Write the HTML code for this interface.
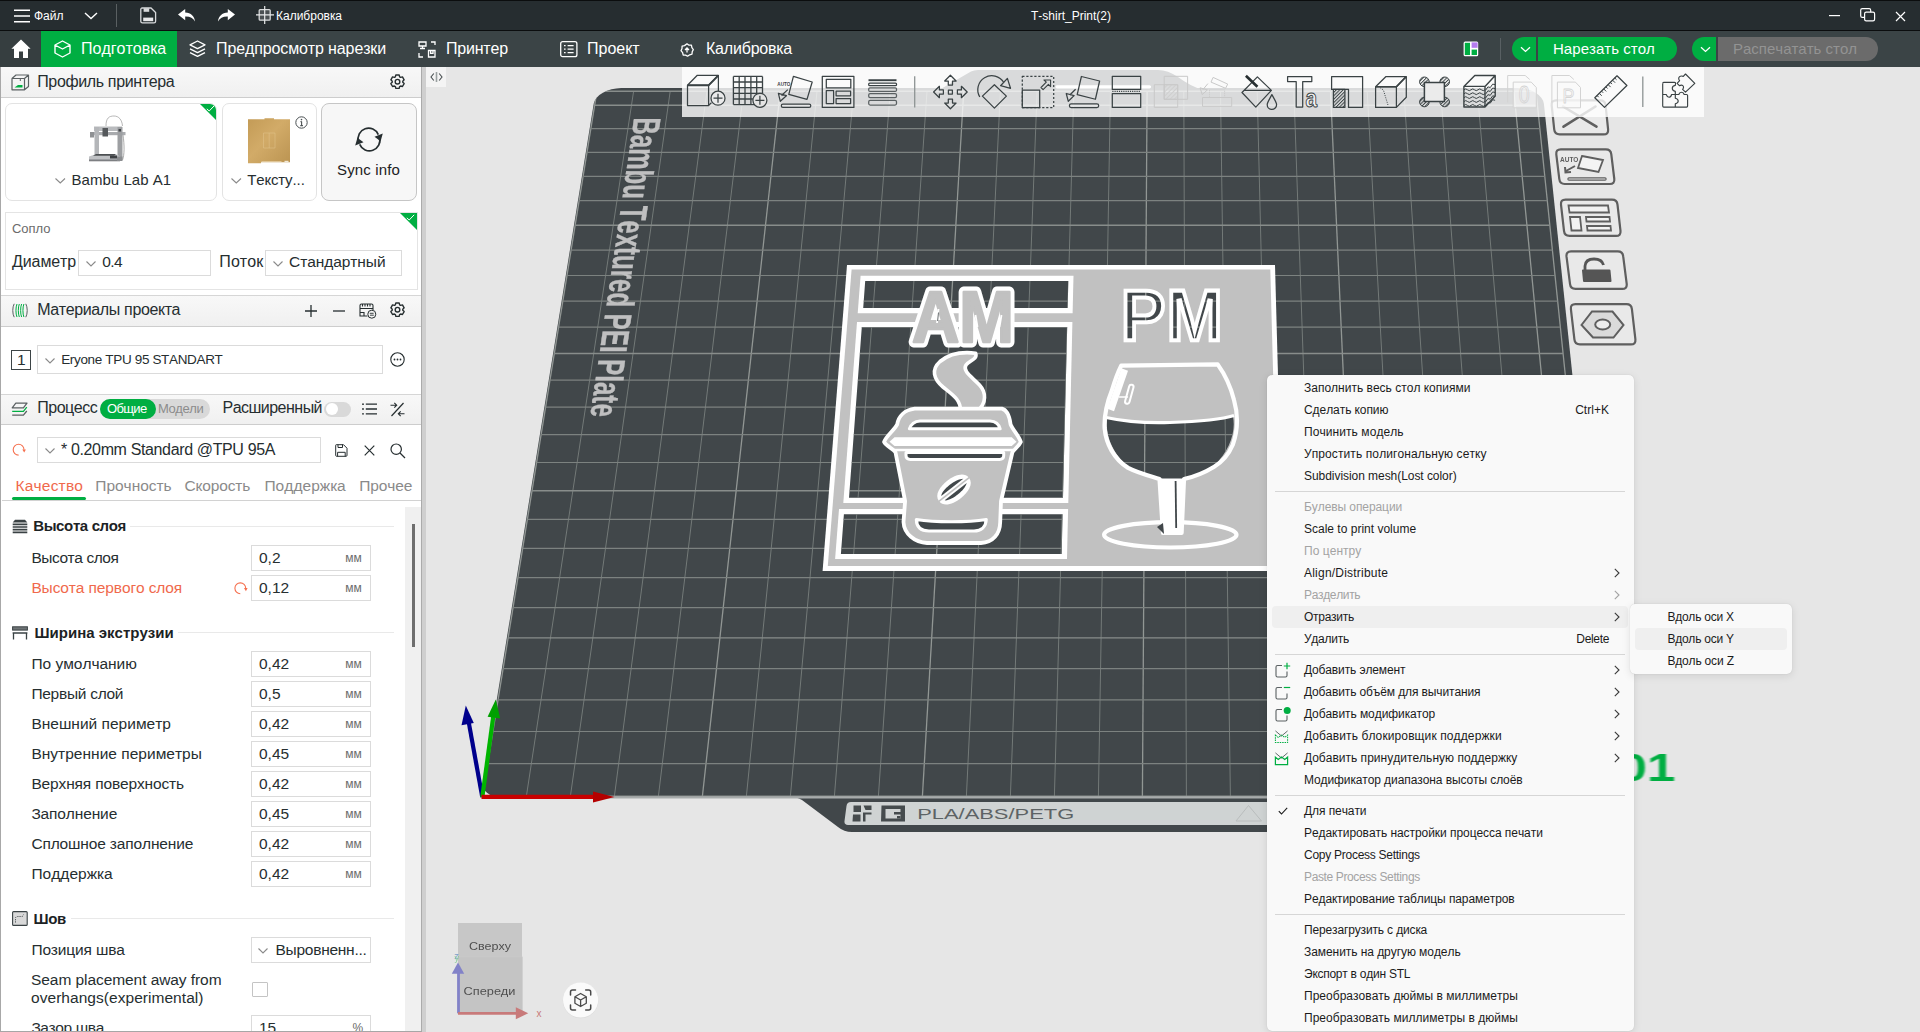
<!DOCTYPE html>
<html lang="ru">
<head>
<meta charset="utf-8">
<title>T-shirt_Print(2)</title>
<style>
*{box-sizing:border-box;margin:0;padding:0}
html,body{width:1920px;height:1032px;overflow:hidden;background:#e6e6e6;font-family:"Liberation Sans",sans-serif;color:#262e30}
.abs,.abs>*{position:absolute}
#app{position:relative;width:1920px;height:1032px;overflow:hidden}
.t{position:absolute;white-space:nowrap;line-height:1;font-kerning:none}
svg{position:absolute;overflow:visible}
/* title bar */
#title{left:0;top:0;width:1920px;height:31px;background:#262d30;border-top:1px solid #0b0d0e;border-bottom:1px solid #0b0d0e}
#title .t{color:#fff;font-size:12px}
/* tab bar */
#tabs{left:0;top:31px;width:1920px;height:36px;background:#3b4446}
#tabs .t{color:#fff;font-size:16px;top:9px}
/* left panel */
.hdr{left:2px;width:418px;height:31px;background:linear-gradient(#f8f8f8,#efefef);border-bottom:1px solid #cfcfcf}
.hdr .t{font-size:16px;color:#262e30}
.box{border:1px solid #dcdcdc;background:#fff}
.lbl{font-size:15.5px;color:#262e30}
.val{font-size:15.5px;color:#262e30}
.unit{font-size:12px;color:#6b6b6b}
.inp{border:1px solid #dbdbdb;background:#fff;width:121px;height:25px;left:250px}
/* menus */
.menu{background:#f9f9f9;border-radius:5px;box-shadow:0 2px 9px rgba(0,0,0,.10),0 0 1px rgba(0,0,0,.18)}
.menu .t{font-size:12px;color:#1a1a1a}
.menu .dis{color:#a0a0a0}
.sep{position:absolute;height:1px;background:#d4d4d4}
</style>
</head>
<body>
<div id="app">
<div id="view" class="abs" style="left:425px;top:67px;width:1495px;height:965px;background:#e6e6e6;overflow:hidden">
<svg style="left:0;top:0" width="1495" height="965" viewBox="425 67 1495 965">
<defs><filter id="blur1" x="-10%" y="-10%" width="120%" height="120%"><feGaussianBlur stdDeviation=".7"/></filter><filter id="blur05"><feGaussianBlur stdDeviation=".35"/></filter><clipPath id="plateclip"><polygon points="593.7,103.8 594.7,100.7 596.6,97.8 599.4,95.1 602.9,92.7 607.0,90.7 611.5,89.3 616.3,88.4 621.2,88.1 1517.3,88.1 1522.2,88.4 1527.0,89.3 1531.4,90.7 1535.4,92.7 1538.7,95.1 1541.3,97.8 1543.1,100.7 1543.9,103.8 1615.3,783.1 1615.3,785.8 1614.5,788.4 1613.0,790.7 1611.0,792.8 1608.3,794.5 1605.3,795.8 1601.9,796.6 1598.3,796.9 499.4,796.9 495.9,796.6 492.5,795.8 489.5,794.5 487.0,792.8 485.0,790.7 483.7,788.4 483.1,785.8 483.2,783.1"/></clipPath></defs>
<path d="M788 796L1625 796L1625 832L852 832Q844 832 838 827L802 800Q796 796.500 788 796Z" fill="#41474a"/>
<polygon points="593.7,103.8 594.7,100.7 596.6,97.8 599.4,95.1 602.9,92.7 607.0,90.7 611.5,89.3 616.3,88.4 621.2,88.1 1517.3,88.1 1522.2,88.4 1527.0,89.3 1531.4,90.7 1535.4,92.7 1538.7,95.1 1541.3,97.8 1543.1,100.7 1543.9,103.8 1615.3,783.1 1615.3,785.8 1614.5,788.4 1613.0,790.7 1611.0,792.8 1608.3,794.5 1605.3,795.8 1601.9,796.6 1598.3,796.9 499.4,796.9 495.9,796.6 492.5,795.8 489.5,794.5 487.0,792.8 485.0,790.7 483.7,788.4 483.1,785.8 483.2,783.1" fill="#41474a"/>
<path d="M939 90L971 71.600Q974 69.900 978 69.900L1158 69.900Q1168 70 1178 77Q1190 86 1203 90Z" fill="#41474a"/>
<path d="M1057 86.800H1149.500" stroke="#fff" stroke-width="3.200" stroke-linecap="round"/>
<g clip-path="url(#plateclip)" opacity=".8"><line x1="596.9" y1="91.3" x2="482.4" y2="796.2" stroke="#a6aba7" stroke-width="1.3"/>
<line x1="633.6" y1="91.3" x2="526.4" y2="796.2" stroke="#878d8a" stroke-width="0.9"/>
<line x1="670.2" y1="91.3" x2="570.4" y2="796.2" stroke="#878d8a" stroke-width="0.9"/>
<line x1="706.9" y1="91.3" x2="614.4" y2="796.2" stroke="#878d8a" stroke-width="0.9"/>
<line x1="743.6" y1="91.3" x2="658.4" y2="796.2" stroke="#878d8a" stroke-width="0.9"/>
<line x1="780.3" y1="91.3" x2="702.4" y2="796.2" stroke="#a6aba7" stroke-width="1.3"/>
<line x1="817.0" y1="91.3" x2="746.4" y2="796.2" stroke="#878d8a" stroke-width="0.9"/>
<line x1="853.7" y1="91.3" x2="790.4" y2="796.2" stroke="#878d8a" stroke-width="0.9"/>
<line x1="890.3" y1="91.3" x2="834.4" y2="796.2" stroke="#878d8a" stroke-width="0.9"/>
<line x1="927.0" y1="91.3" x2="878.4" y2="796.2" stroke="#878d8a" stroke-width="0.9"/>
<line x1="963.7" y1="91.3" x2="922.4" y2="796.2" stroke="#a6aba7" stroke-width="1.3"/>
<line x1="1000.4" y1="91.3" x2="966.4" y2="796.2" stroke="#878d8a" stroke-width="0.9"/>
<line x1="1037.1" y1="91.3" x2="1010.4" y2="796.2" stroke="#878d8a" stroke-width="0.9"/>
<line x1="1073.8" y1="91.3" x2="1054.4" y2="796.2" stroke="#878d8a" stroke-width="0.9"/>
<line x1="1110.4" y1="91.3" x2="1098.4" y2="796.2" stroke="#878d8a" stroke-width="0.9"/>
<line x1="1147.1" y1="91.3" x2="1142.4" y2="796.2" stroke="#a6aba7" stroke-width="1.3"/>
<line x1="1183.8" y1="91.3" x2="1186.4" y2="796.2" stroke="#878d8a" stroke-width="0.9"/>
<line x1="1220.5" y1="91.3" x2="1230.4" y2="796.2" stroke="#878d8a" stroke-width="0.9"/>
<line x1="1257.2" y1="91.3" x2="1274.4" y2="796.2" stroke="#878d8a" stroke-width="0.9"/>
<line x1="1293.9" y1="91.3" x2="1318.4" y2="796.2" stroke="#878d8a" stroke-width="0.9"/>
<line x1="1330.5" y1="91.3" x2="1362.4" y2="796.2" stroke="#a6aba7" stroke-width="1.3"/>
<line x1="1367.2" y1="91.3" x2="1406.4" y2="796.2" stroke="#878d8a" stroke-width="0.9"/>
<line x1="1403.9" y1="91.3" x2="1450.4" y2="796.2" stroke="#878d8a" stroke-width="0.9"/>
<line x1="1440.6" y1="91.3" x2="1494.4" y2="796.2" stroke="#878d8a" stroke-width="0.9"/>
<line x1="1477.3" y1="91.3" x2="1538.4" y2="796.2" stroke="#878d8a" stroke-width="0.9"/>
<line x1="1513.9" y1="91.3" x2="1582.4" y2="796.2" stroke="#a6aba7" stroke-width="1.3"/>
<line x1="1536.0" y1="91.3" x2="1608.8" y2="796.2" stroke="#a6aba7" stroke-width="1.3"/>
<line x1="482.4" y1="796.2" x2="1608.8" y2="796.2" stroke="#9a9f9c" stroke-width="1.4"/>
<line x1="487.7" y1="763.6" x2="1605.4" y2="763.6" stroke="#8b918e" stroke-width="1.2"/>
<line x1="492.9" y1="731.5" x2="1602.1" y2="731.5" stroke="#8b918e" stroke-width="1.2"/>
<line x1="498.0" y1="699.8" x2="1598.8" y2="699.8" stroke="#8b918e" stroke-width="1.2"/>
<line x1="503.1" y1="668.6" x2="1595.6" y2="668.6" stroke="#8b918e" stroke-width="1.2"/>
<line x1="508.1" y1="637.9" x2="1592.4" y2="637.9" stroke="#9a9f9c" stroke-width="1.4"/>
<line x1="513.0" y1="607.6" x2="1589.3" y2="607.6" stroke="#8b918e" stroke-width="1.2"/>
<line x1="517.9" y1="577.7" x2="1586.2" y2="577.7" stroke="#8b918e" stroke-width="1.2"/>
<line x1="522.6" y1="548.3" x2="1583.2" y2="548.3" stroke="#8b918e" stroke-width="1.2"/>
<line x1="527.4" y1="519.3" x2="1580.2" y2="519.3" stroke="#8b918e" stroke-width="1.2"/>
<line x1="532.0" y1="490.7" x2="1577.2" y2="490.7" stroke="#9a9f9c" stroke-width="1.4"/>
<line x1="536.6" y1="462.5" x2="1574.3" y2="462.5" stroke="#8b918e" stroke-width="1.2"/>
<line x1="541.1" y1="434.6" x2="1571.4" y2="434.6" stroke="#8b918e" stroke-width="1.2"/>
<line x1="545.6" y1="407.2" x2="1568.6" y2="407.2" stroke="#8b918e" stroke-width="1.2"/>
<line x1="550.0" y1="380.1" x2="1565.8" y2="380.1" stroke="#8b918e" stroke-width="1.2"/>
<line x1="554.3" y1="353.5" x2="1563.0" y2="353.5" stroke="#9a9f9c" stroke-width="1.4"/>
<line x1="558.6" y1="327.1" x2="1560.3" y2="327.1" stroke="#8b918e" stroke-width="1.2"/>
<line x1="562.8" y1="301.1" x2="1557.6" y2="301.1" stroke="#8b918e" stroke-width="1.2"/>
<line x1="567.0" y1="275.5" x2="1555.0" y2="275.5" stroke="#8b918e" stroke-width="1.2"/>
<line x1="571.1" y1="250.2" x2="1552.4" y2="250.2" stroke="#8b918e" stroke-width="1.2"/>
<line x1="575.1" y1="225.3" x2="1549.8" y2="225.3" stroke="#9a9f9c" stroke-width="1.4"/>
<line x1="579.1" y1="200.6" x2="1547.3" y2="200.6" stroke="#8b918e" stroke-width="1.2"/>
<line x1="583.1" y1="176.3" x2="1544.7" y2="176.3" stroke="#8b918e" stroke-width="1.2"/>
<line x1="587.0" y1="152.3" x2="1542.3" y2="152.3" stroke="#8b918e" stroke-width="1.2"/>
<line x1="590.8" y1="128.6" x2="1539.8" y2="128.6" stroke="#8b918e" stroke-width="1.2"/>
<line x1="594.6" y1="105.2" x2="1537.4" y2="105.2" stroke="#9a9f9c" stroke-width="1.4"/>
<line x1="596.9" y1="91.3" x2="1536.0" y2="91.3" stroke="#9a9f9c" stroke-width="1.4"/>
</g>
<path d="M506 797.3L1625 797.3" stroke="#a7abab" stroke-width="2.2"/>
<text transform="matrix(-0.03535 0.24049 -0.38499 0.00000 634.22 117.46)" font-family="Liberation Sans" font-weight="700" font-size="100" fill="#cdcdcd" stroke="#cdcdcd" stroke-width="1" opacity=".9" style="font-kerning:none">Bambu Textured PEI Plate</text>
<g id="model">
<defs><clipPath id="mcut"><polygon points="865.2,281.0 1068.3,281.0 1067.7,308.0 863.2,308.0" fill="#000"/>
<polygon points="861.8,327.1 1067.2,327.1 1063.0,497.7 849.0,497.7" fill="#000"/>
<polygon points="843.9,514.3 1062.6,514.3 1061.7,553.9 840.9,553.9" fill="#000"/>
<path d="M1107.2 418.5C1122 421,1140 423.5,1170 422.5C1200 421.5,1220 420,1233 416.5C1236 432,1230 450,1214 466C1204 473,1192 477,1183 479L1163 479C1150 476,1136 472,1128 467C1112 452,1105 435,1107.2 418.5Z"/></clipPath></defs>
<polygon points="847,265 1275,265 1283.3,571 822.6,571" fill="#fff"/>
<polygon points="851.6,269.6 1270.3,269.6 1278.3,566 827.8,566" fill="#c1c1c1"/>
<polygon points="860.6,275.8 1073.5,275.8 1072.6,313.2 857.7,313.2" fill="#fff"/>
<polygon points="857.0,321.9 1072.4,321.9 1068.3,502.9 843.3,502.9" fill="#fff"/>
<polygon points="839.0,509.1 1068.1,509.1 1067.0,559.1 835.1,559.1" fill="#fff"/>
<g clip-path="url(#mcut)"><rect x="820" y="260" width="470" height="315" fill="#41474a"/><g opacity=".8"><line x1="596.9" y1="91.3" x2="482.4" y2="796.2" stroke="#a6aba7" stroke-width="1.3"/>
<line x1="633.6" y1="91.3" x2="526.4" y2="796.2" stroke="#878d8a" stroke-width="0.9"/>
<line x1="670.2" y1="91.3" x2="570.4" y2="796.2" stroke="#878d8a" stroke-width="0.9"/>
<line x1="706.9" y1="91.3" x2="614.4" y2="796.2" stroke="#878d8a" stroke-width="0.9"/>
<line x1="743.6" y1="91.3" x2="658.4" y2="796.2" stroke="#878d8a" stroke-width="0.9"/>
<line x1="780.3" y1="91.3" x2="702.4" y2="796.2" stroke="#a6aba7" stroke-width="1.3"/>
<line x1="817.0" y1="91.3" x2="746.4" y2="796.2" stroke="#878d8a" stroke-width="0.9"/>
<line x1="853.7" y1="91.3" x2="790.4" y2="796.2" stroke="#878d8a" stroke-width="0.9"/>
<line x1="890.3" y1="91.3" x2="834.4" y2="796.2" stroke="#878d8a" stroke-width="0.9"/>
<line x1="927.0" y1="91.3" x2="878.4" y2="796.2" stroke="#878d8a" stroke-width="0.9"/>
<line x1="963.7" y1="91.3" x2="922.4" y2="796.2" stroke="#a6aba7" stroke-width="1.3"/>
<line x1="1000.4" y1="91.3" x2="966.4" y2="796.2" stroke="#878d8a" stroke-width="0.9"/>
<line x1="1037.1" y1="91.3" x2="1010.4" y2="796.2" stroke="#878d8a" stroke-width="0.9"/>
<line x1="1073.8" y1="91.3" x2="1054.4" y2="796.2" stroke="#878d8a" stroke-width="0.9"/>
<line x1="1110.4" y1="91.3" x2="1098.4" y2="796.2" stroke="#878d8a" stroke-width="0.9"/>
<line x1="1147.1" y1="91.3" x2="1142.4" y2="796.2" stroke="#a6aba7" stroke-width="1.3"/>
<line x1="1183.8" y1="91.3" x2="1186.4" y2="796.2" stroke="#878d8a" stroke-width="0.9"/>
<line x1="1220.5" y1="91.3" x2="1230.4" y2="796.2" stroke="#878d8a" stroke-width="0.9"/>
<line x1="1257.2" y1="91.3" x2="1274.4" y2="796.2" stroke="#878d8a" stroke-width="0.9"/>
<line x1="1293.9" y1="91.3" x2="1318.4" y2="796.2" stroke="#878d8a" stroke-width="0.9"/>
<line x1="1330.5" y1="91.3" x2="1362.4" y2="796.2" stroke="#a6aba7" stroke-width="1.3"/>
<line x1="1367.2" y1="91.3" x2="1406.4" y2="796.2" stroke="#878d8a" stroke-width="0.9"/>
<line x1="1403.9" y1="91.3" x2="1450.4" y2="796.2" stroke="#878d8a" stroke-width="0.9"/>
<line x1="1440.6" y1="91.3" x2="1494.4" y2="796.2" stroke="#878d8a" stroke-width="0.9"/>
<line x1="1477.3" y1="91.3" x2="1538.4" y2="796.2" stroke="#878d8a" stroke-width="0.9"/>
<line x1="1513.9" y1="91.3" x2="1582.4" y2="796.2" stroke="#a6aba7" stroke-width="1.3"/>
<line x1="1536.0" y1="91.3" x2="1608.8" y2="796.2" stroke="#a6aba7" stroke-width="1.3"/>
<line x1="482.4" y1="796.2" x2="1608.8" y2="796.2" stroke="#9a9f9c" stroke-width="1.4"/>
<line x1="487.7" y1="763.6" x2="1605.4" y2="763.6" stroke="#8b918e" stroke-width="1.2"/>
<line x1="492.9" y1="731.5" x2="1602.1" y2="731.5" stroke="#8b918e" stroke-width="1.2"/>
<line x1="498.0" y1="699.8" x2="1598.8" y2="699.8" stroke="#8b918e" stroke-width="1.2"/>
<line x1="503.1" y1="668.6" x2="1595.6" y2="668.6" stroke="#8b918e" stroke-width="1.2"/>
<line x1="508.1" y1="637.9" x2="1592.4" y2="637.9" stroke="#9a9f9c" stroke-width="1.4"/>
<line x1="513.0" y1="607.6" x2="1589.3" y2="607.6" stroke="#8b918e" stroke-width="1.2"/>
<line x1="517.9" y1="577.7" x2="1586.2" y2="577.7" stroke="#8b918e" stroke-width="1.2"/>
<line x1="522.6" y1="548.3" x2="1583.2" y2="548.3" stroke="#8b918e" stroke-width="1.2"/>
<line x1="527.4" y1="519.3" x2="1580.2" y2="519.3" stroke="#8b918e" stroke-width="1.2"/>
<line x1="532.0" y1="490.7" x2="1577.2" y2="490.7" stroke="#9a9f9c" stroke-width="1.4"/>
<line x1="536.6" y1="462.5" x2="1574.3" y2="462.5" stroke="#8b918e" stroke-width="1.2"/>
<line x1="541.1" y1="434.6" x2="1571.4" y2="434.6" stroke="#8b918e" stroke-width="1.2"/>
<line x1="545.6" y1="407.2" x2="1568.6" y2="407.2" stroke="#8b918e" stroke-width="1.2"/>
<line x1="550.0" y1="380.1" x2="1565.8" y2="380.1" stroke="#8b918e" stroke-width="1.2"/>
<line x1="554.3" y1="353.5" x2="1563.0" y2="353.5" stroke="#9a9f9c" stroke-width="1.4"/>
<line x1="558.6" y1="327.1" x2="1560.3" y2="327.1" stroke="#8b918e" stroke-width="1.2"/>
<line x1="562.8" y1="301.1" x2="1557.6" y2="301.1" stroke="#8b918e" stroke-width="1.2"/>
<line x1="567.0" y1="275.5" x2="1555.0" y2="275.5" stroke="#8b918e" stroke-width="1.2"/>
<line x1="571.1" y1="250.2" x2="1552.4" y2="250.2" stroke="#8b918e" stroke-width="1.2"/>
<line x1="575.1" y1="225.3" x2="1549.8" y2="225.3" stroke="#9a9f9c" stroke-width="1.4"/>
<line x1="579.1" y1="200.6" x2="1547.3" y2="200.6" stroke="#8b918e" stroke-width="1.2"/>
<line x1="583.1" y1="176.3" x2="1544.7" y2="176.3" stroke="#8b918e" stroke-width="1.2"/>
<line x1="587.0" y1="152.3" x2="1542.3" y2="152.3" stroke="#8b918e" stroke-width="1.2"/>
<line x1="590.8" y1="128.6" x2="1539.8" y2="128.6" stroke="#8b918e" stroke-width="1.2"/>
<line x1="594.6" y1="105.2" x2="1537.4" y2="105.2" stroke="#9a9f9c" stroke-width="1.4"/>
<line x1="596.9" y1="91.3" x2="1536.0" y2="91.3" stroke="#9a9f9c" stroke-width="1.4"/>
</g></g>
<defs><mask id="pmin" maskUnits="userSpaceOnUse" x="1100" y="270" width="140" height="90"><text transform="translate(1120.200 340.900) scale(.938 1)" font-family="Liberation Sans" font-weight="700" font-size="73.300" fill="#fff" stroke="#000" stroke-width="5.600" stroke-linejoin="miter">PM</text></mask></defs>
<text transform="translate(1120.200 340.900) scale(.938 1)" font-family="Liberation Sans" font-weight="700" font-size="73.300" fill="#fff" stroke="#fff" stroke-width="2.600" stroke-linejoin="miter">PM</text>
<g mask="url(#pmin)"><rect x="1100" y="270" width="140" height="90" fill="#41474a"/><g opacity=".8"><line x1="596.9" y1="91.3" x2="482.4" y2="796.2" stroke="#a6aba7" stroke-width="1.3"/>
<line x1="633.6" y1="91.3" x2="526.4" y2="796.2" stroke="#878d8a" stroke-width="0.9"/>
<line x1="670.2" y1="91.3" x2="570.4" y2="796.2" stroke="#878d8a" stroke-width="0.9"/>
<line x1="706.9" y1="91.3" x2="614.4" y2="796.2" stroke="#878d8a" stroke-width="0.9"/>
<line x1="743.6" y1="91.3" x2="658.4" y2="796.2" stroke="#878d8a" stroke-width="0.9"/>
<line x1="780.3" y1="91.3" x2="702.4" y2="796.2" stroke="#a6aba7" stroke-width="1.3"/>
<line x1="817.0" y1="91.3" x2="746.4" y2="796.2" stroke="#878d8a" stroke-width="0.9"/>
<line x1="853.7" y1="91.3" x2="790.4" y2="796.2" stroke="#878d8a" stroke-width="0.9"/>
<line x1="890.3" y1="91.3" x2="834.4" y2="796.2" stroke="#878d8a" stroke-width="0.9"/>
<line x1="927.0" y1="91.3" x2="878.4" y2="796.2" stroke="#878d8a" stroke-width="0.9"/>
<line x1="963.7" y1="91.3" x2="922.4" y2="796.2" stroke="#a6aba7" stroke-width="1.3"/>
<line x1="1000.4" y1="91.3" x2="966.4" y2="796.2" stroke="#878d8a" stroke-width="0.9"/>
<line x1="1037.1" y1="91.3" x2="1010.4" y2="796.2" stroke="#878d8a" stroke-width="0.9"/>
<line x1="1073.8" y1="91.3" x2="1054.4" y2="796.2" stroke="#878d8a" stroke-width="0.9"/>
<line x1="1110.4" y1="91.3" x2="1098.4" y2="796.2" stroke="#878d8a" stroke-width="0.9"/>
<line x1="1147.1" y1="91.3" x2="1142.4" y2="796.2" stroke="#a6aba7" stroke-width="1.3"/>
<line x1="1183.8" y1="91.3" x2="1186.4" y2="796.2" stroke="#878d8a" stroke-width="0.9"/>
<line x1="1220.5" y1="91.3" x2="1230.4" y2="796.2" stroke="#878d8a" stroke-width="0.9"/>
<line x1="1257.2" y1="91.3" x2="1274.4" y2="796.2" stroke="#878d8a" stroke-width="0.9"/>
<line x1="1293.9" y1="91.3" x2="1318.4" y2="796.2" stroke="#878d8a" stroke-width="0.9"/>
<line x1="1330.5" y1="91.3" x2="1362.4" y2="796.2" stroke="#a6aba7" stroke-width="1.3"/>
<line x1="1367.2" y1="91.3" x2="1406.4" y2="796.2" stroke="#878d8a" stroke-width="0.9"/>
<line x1="1403.9" y1="91.3" x2="1450.4" y2="796.2" stroke="#878d8a" stroke-width="0.9"/>
<line x1="1440.6" y1="91.3" x2="1494.4" y2="796.2" stroke="#878d8a" stroke-width="0.9"/>
<line x1="1477.3" y1="91.3" x2="1538.4" y2="796.2" stroke="#878d8a" stroke-width="0.9"/>
<line x1="1513.9" y1="91.3" x2="1582.4" y2="796.2" stroke="#a6aba7" stroke-width="1.3"/>
<line x1="1536.0" y1="91.3" x2="1608.8" y2="796.2" stroke="#a6aba7" stroke-width="1.3"/>
<line x1="482.4" y1="796.2" x2="1608.8" y2="796.2" stroke="#9a9f9c" stroke-width="1.4"/>
<line x1="487.7" y1="763.6" x2="1605.4" y2="763.6" stroke="#8b918e" stroke-width="1.2"/>
<line x1="492.9" y1="731.5" x2="1602.1" y2="731.5" stroke="#8b918e" stroke-width="1.2"/>
<line x1="498.0" y1="699.8" x2="1598.8" y2="699.8" stroke="#8b918e" stroke-width="1.2"/>
<line x1="503.1" y1="668.6" x2="1595.6" y2="668.6" stroke="#8b918e" stroke-width="1.2"/>
<line x1="508.1" y1="637.9" x2="1592.4" y2="637.9" stroke="#9a9f9c" stroke-width="1.4"/>
<line x1="513.0" y1="607.6" x2="1589.3" y2="607.6" stroke="#8b918e" stroke-width="1.2"/>
<line x1="517.9" y1="577.7" x2="1586.2" y2="577.7" stroke="#8b918e" stroke-width="1.2"/>
<line x1="522.6" y1="548.3" x2="1583.2" y2="548.3" stroke="#8b918e" stroke-width="1.2"/>
<line x1="527.4" y1="519.3" x2="1580.2" y2="519.3" stroke="#8b918e" stroke-width="1.2"/>
<line x1="532.0" y1="490.7" x2="1577.2" y2="490.7" stroke="#9a9f9c" stroke-width="1.4"/>
<line x1="536.6" y1="462.5" x2="1574.3" y2="462.5" stroke="#8b918e" stroke-width="1.2"/>
<line x1="541.1" y1="434.6" x2="1571.4" y2="434.6" stroke="#8b918e" stroke-width="1.2"/>
<line x1="545.6" y1="407.2" x2="1568.6" y2="407.2" stroke="#8b918e" stroke-width="1.2"/>
<line x1="550.0" y1="380.1" x2="1565.8" y2="380.1" stroke="#8b918e" stroke-width="1.2"/>
<line x1="554.3" y1="353.5" x2="1563.0" y2="353.5" stroke="#9a9f9c" stroke-width="1.4"/>
<line x1="558.6" y1="327.1" x2="1560.3" y2="327.1" stroke="#8b918e" stroke-width="1.2"/>
<line x1="562.8" y1="301.1" x2="1557.6" y2="301.1" stroke="#8b918e" stroke-width="1.2"/>
<line x1="567.0" y1="275.5" x2="1555.0" y2="275.5" stroke="#8b918e" stroke-width="1.2"/>
<line x1="571.1" y1="250.2" x2="1552.4" y2="250.2" stroke="#8b918e" stroke-width="1.2"/>
<line x1="575.1" y1="225.3" x2="1549.8" y2="225.3" stroke="#9a9f9c" stroke-width="1.4"/>
<line x1="579.1" y1="200.6" x2="1547.3" y2="200.6" stroke="#8b918e" stroke-width="1.2"/>
<line x1="583.1" y1="176.3" x2="1544.7" y2="176.3" stroke="#8b918e" stroke-width="1.2"/>
<line x1="587.0" y1="152.3" x2="1542.3" y2="152.3" stroke="#8b918e" stroke-width="1.2"/>
<line x1="590.8" y1="128.6" x2="1539.8" y2="128.6" stroke="#8b918e" stroke-width="1.2"/>
<line x1="594.6" y1="105.2" x2="1537.4" y2="105.2" stroke="#9a9f9c" stroke-width="1.4"/>
<line x1="596.9" y1="91.3" x2="1536.0" y2="91.3" stroke="#9a9f9c" stroke-width="1.4"/>
</g></g>
<text transform="translate(912 342.300) scale(.912 1)" font-family="Liberation Sans" font-weight="700" font-size="71.900" fill="#fff" stroke="#fff" stroke-width="10.900" stroke-linejoin="round">AM</text>
<text transform="translate(912 342.300) scale(.912 1)" font-family="Liberation Sans" font-weight="700" font-size="71.900" fill="#c1c1c1" stroke="#c1c1c1" stroke-width="2.400" stroke-linejoin="round">AM</text>
<path d="M938.500 309L937 323M975.500 315L977.500 327M1001.500 315L999.500 327" stroke="#fff" stroke-width="1.800" fill="none"/><path d="M938.500 312.500L937.600 321" stroke="#41474a" stroke-width=".8"/>
<path d="M975.6 353.2C962 351.500 949 354 940 361.500C931 369.500 933.500 379 943 387C953 395 961 400 960.500 411L977.500 411C987 403 986 392 979.500 385C972 377 962 371 966 365C969 360.500 978 359.500 975.600 353.200Z" fill="#c1c1c1" stroke="#fff" stroke-width="3.6" stroke-linejoin="round"/>
<path d="M914.700 408.700L1001.900 408.700C1007 410 1009.500 416 1010.600 424.400C1013 430 1019 436 1020.800 441.900C1019 446 1014.500 449 1012.400 452.300L1001 501.200L1000.200 522C1000 534 993 542.500 981 543L927 543C915 542.500 904 534 903.500 522L905.100 501.200L895.500 452.300C893.500 449 886 446 884.100 441.900C886 436 894.500 430 897.200 424.400C898.500 416 905 410 914.700 408.700Z" fill="#c1c1c1" stroke="#fff" stroke-width="3.8" stroke-linejoin="round"/>
<path d="M909.400 428.800C911 424 914 421.300 920 420.900L990 420.900C996 421.300 999 424 1000.200 428.800Z" fill="#41474a" stroke="#fff" stroke-width="3" stroke-linejoin="round"/>
<path d="M889.500 441.700L894.500 437.200H1011.800L1016.500 441.700L1011.800 446H894.500Z" fill="#fff"/>
<path d="M894.500 450L1013 450" stroke="#fff" stroke-width="2.4"/>
<path d="M906 452.600H1003.700V455.500Q1003.700 459.400 999.500 459.400H910.500Q906 459.400 906 455.500Z" fill="#41474a" stroke="#fff" stroke-width="3" stroke-linejoin="round"/>
<path d="M916.400 519.500C935 522.500 968 522.500 986.200 519.500C986 527 981 531 974 531H929C921 531 916.500 527 916.400 519.500Z" fill="#41474a" stroke="#fff" stroke-width="3.200" stroke-linejoin="round"/>
<g transform="translate(954 489.500) rotate(-38)"><path d="M-19 0C-19 -8 -9 -11 0 -11C9 -11 19 -8 19 0C19 8 9 11 0 11C-9 11 -19 8 -19 0Z" fill="#fff"/><path d="M-14 -2.800C-10 -7.500 8 -7.500 14 -2.800Z" fill="#41474a"/><path d="M-14 2.800C-10 7.500 8 7.500 14 2.800Z" fill="#41474a"/><path d="M-20 0H20" stroke="#c1c1c1" stroke-width="1.600"/></g>
<ellipse cx="1170.300" cy="534.800" rx="66.200" ry="12.700" fill="none" stroke="#fff" stroke-width="4.200"/>
<path d="M1121.200 365.600L1217.700 364.400C1226 376 1231 388 1234 400C1238 414 1238 430 1232.800 444.700C1228 456 1222 462 1214.200 466.700C1204 473 1193 477 1184 479L1181.600 533L1163 533L1159.500 479C1150 476 1138 473 1128.100 467.900C1114 459 1106 444 1104.600 428C1104 414 1108 400 1112 390C1115 380 1118 372 1121.200 365.600Z" fill="none" stroke="#fff" stroke-width="4.200" stroke-linejoin="round"/>
<path d="M1106 417.500C1122 421 1140 423.500 1170 422.500C1200 421.500 1220 420 1234 415.500" fill="none" stroke="#fff" stroke-width="3.200"/>
<path d="M1159.500 478.500L1184 478.500L1181.600 533.500L1163 533.500Z" fill="#fff"/>
<path d="M1175.600 481L1176.200 528" stroke="#41474a" stroke-width="1.800"/>
<path d="M1163 523L1157 527L1164 534Z" fill="#41474a"/>
<path d="M1124.700 369.500L1110.700 410" stroke="#fff" stroke-width="7" stroke-linecap="butt"/>
<path d="M1131.300 387L1127.300 401.500" stroke="#fff" stroke-width="6.500" stroke-linecap="round"/><path d="M1131.300 387L1127.300 401.500" stroke="#c1c1c1" stroke-width="2.500" stroke-linecap="round"/>
<path d="M1119 397H1128" stroke="#fff" stroke-width="1.500"/>
</g>
<path d="M482.3 797.200L467.6 716" stroke="#00008c" stroke-width="4.2"/><path d="M465.8 705.5L473.8 723L461.5 725.3Z" fill="#00008c"/>
<path d="M482.3 797.200L493.6 714" stroke="#00b400" stroke-width="4.2"/><path d="M495.8 699.5L500.2 718.5L487.6 716.8Z" fill="#00a000"/>
<path d="M481.5 796.900L595 796.900" stroke="#c80000" stroke-width="4.4"/><path d="M614.5 796.900L593 791.400L593 802.400Z" fill="#b40000"/>
<path d="M851 802H1625V825H848Q844 825 844.5 821L846.5 806Q847 802 851 802Z" fill="#cfd3d3"/>
<g fill="#454b4d"><path d="M853.5 805.500H861V812H853.500ZM863.500 805.500H871.500V810H865.500ZM853 814.500H860.500V821.500H852.500ZM863 812.500H871.500V814.500H865.500V821.500H863Z"/><path d="M881.500 805.500H905V821.500H881ZM885.500 809V818.500H900.500V814.500H894V812H900.500V809Z" fill-rule="evenodd"/><rect x="897" y="816" width="3.500" height="2.500"/></g>
<text x="917.200" y="818.600" font-family="Liberation Sans" font-size="14.200" fill="#5d6365" textLength="157" lengthAdjust="spacingAndGlyphs" style="font-kerning:none" transform="translate(0 0)">PLA/ABS/PETG</text>
<path d="M1248.500 805.500L1261.500 821H1236Z" fill="none" stroke="#b9bdbd" stroke-width="1"/>
<g filter="url(#blur1)"><path d="M1556.2 100.3L1600.1 100.3Q1605.1 100.3 1605.6 105.3L1608.1 129.4Q1608.6 134.4 1603.6 134.4L1559.7 134.4Q1554.7 134.4 1554.2 129.4L1551.7 105.3Q1551.2 100.3 1556.2 100.3Z" fill="#e9e9e9" stroke="#5e5e5e" stroke-width="2.2"/>
<path d="M1563.500 126.700L1595.500 106.500M1596.500 126.700L1563 106.500" fill="none" stroke="#5e5e5e" stroke-width="2.600" stroke-linecap="round"/>
<path d="M1560.8 149.3L1605.8 149.3Q1610.8 149.3 1611.3 154.3L1614.3 179.0Q1614.8 184.0 1609.8 184.0L1564.8 184.0Q1559.8 184.0 1559.3 179.0L1556.3 154.3Q1555.8 149.3 1560.8 149.3Z" fill="#e9e9e9" stroke="#5e5e5e" stroke-width="2.2"/>
<path d="M1582 156L1603 160L1598.500 172L1578 168Z" fill="#f4f4f4" stroke="#5e5e5e" stroke-width="1.800"/><path d="M1569 179H1605" stroke="#5e5e5e" stroke-width="3.400" stroke-linecap="round"/><path d="M1569 179H1605" stroke="#e6e6e6" stroke-width="1.200" stroke-linecap="round"/><path d="M1575 166L1566 171M1565 167L1565.500 172.500L1571 172" fill="none" stroke="#5e5e5e" stroke-width="2"/><text x="1560" y="161.500" font-family="Liberation Sans" font-weight="700" font-size="6.500" fill="#5e5e5e">AUTO</text>
<path d="M1565.5 199.6L1612.0 199.6Q1617.0 199.6 1617.5 204.6L1620.5 230.9Q1621.0 235.9 1616.0 235.9L1569.5 235.9Q1564.5 235.9 1564.0 230.9L1561.0 204.6Q1560.5 199.6 1565.5 199.6Z" fill="#e9e9e9" stroke="#5e5e5e" stroke-width="2.2"/>
<path d="M1568.500 205.500H1608L1609 212.500H1569.500ZM1570 217H1580L1581.500 230.500H1571.500ZM1586 217H1609.500L1610 221.500H1586.500ZM1587 226H1610.500L1611 230.500H1587.500Z" fill="#f2f2f2" stroke="#5e5e5e" stroke-width="1.800"/>
<path d="M1571.0 251.4L1617.7 251.4Q1622.7 251.4 1623.2 256.4L1626.7 283.9Q1627.2 288.9 1622.2 288.9L1575.5 288.9Q1570.5 288.9 1570.0 283.9L1566.5 256.4Q1566.0 251.4 1571.0 251.4Z" fill="#e9e9e9" stroke="#5e5e5e" stroke-width="2.2"/>
<path d="M1583 270.500H1609.500L1610.500 281H1584Z" fill="#555" stroke="#555" stroke-width="2" stroke-linejoin="round"/><path d="M1585 270V266Q1585.500 259 1594 259Q1602 259 1603.500 265" fill="none" stroke="#555" stroke-width="2.800"/>
<path d="M1575.4 304.1L1626.4 304.1Q1631.4 304.1 1631.9 309.1L1635.4 339.4Q1635.9 344.4 1630.9 344.4L1579.9 344.4Q1574.9 344.4 1574.4 339.4L1570.9 309.1Q1570.4 304.1 1575.4 304.1Z" fill="#e9e9e9" stroke="#5e5e5e" stroke-width="2.2"/>
<path d="M1581.500 325L1592 311.500H1612.500L1623.500 325L1613.500 337.500H1593Z" fill="#dadada" stroke="#5e5e5e" stroke-width="2"/><ellipse cx="1602.700" cy="324.500" rx="7.500" ry="5" fill="#ededed" stroke="#5e5e5e" stroke-width="2"/>
</g>
<text transform="translate(1618.500 780.500) scale(1.330 1)" font-family="Liberation Sans" font-weight="700" font-size="38.500" fill="#00ae42" filter="url(#blur1)">01</text>
<rect x="458" y="923" width="64" height="34" fill="#c7c7c7"/><rect x="458" y="956.600" width="64.600" height="56.700" fill="#c4c4c4"/><path d="M458 956.800H522" stroke="#cbcbcb" stroke-width=".8"/>
<g filter="url(#blur05)"><text x="469" y="949.600" font-family="Liberation Sans" font-size="10.500" fill="#505050" textLength="42" lengthAdjust="spacingAndGlyphs">Сверху</text><text x="463.600" y="995" font-family="Liberation Sans" font-size="10.500" fill="#505050" textLength="51.800" lengthAdjust="spacingAndGlyphs">Спереди</text></g>
<path d="M458.500 1013.300V972" stroke="#8282c8" stroke-width="2.800"/><path d="M458 962.500L464.200 973.800H451.800Z" fill="#8282c8"/>
<path d="M458 1013.300H517" stroke="#c87a7a" stroke-width="2.800"/><path d="M528.200 1013.300L515.800 1007.300V1019.300Z" fill="#c87a7a"/>
<text x="536.500" y="1017.200" font-family="Liberation Sans" font-size="10" fill="#c87a7a">x</text>
<text x="454.200" y="958.500" font-family="Liberation Sans" font-size="9" fill="#7aa0c8">z</text><text x="454.400" y="960.500" font-family="Liberation Sans" font-size="9" fill="#7ac88a" opacity=".8">y</text>
<circle cx="580.600" cy="1000.500" r="17.800" fill="#000" opacity=".05" filter="url(#blur1)"/><circle cx="580.600" cy="1000" r="17.600" fill="#fafafa"/>
<g fill="none" stroke="#4a4a4a" stroke-width="1.500"><path d="M570.500 995V992Q570.500 990 572.500 990H575.500M585.700 990H588.700Q590.700 990 590.700 992V995M590.700 1005V1008Q590.700 1010 588.700 1010H585.700M575.500 1010H572.500Q570.500 1010 570.500 1008V1005" stroke-linecap="round"/><path d="M580.600 993.500L586.300 996.700V1003.300L580.600 1006.500L574.900 1003.300V996.700ZM574.900 996.700L580.600 1000L586.300 996.700M580.600 1000V1006.500" stroke-width="1.300" stroke-linejoin="round"/></g>
</svg>
</div>
<div class="abs" style="left:682px;top:67px;width:1022px;height:49.600px;background:rgba(255,255,255,.8)"></div>
<svg style="left:682px;top:67px" width="1022" height="50" viewBox="682 67 1022 50" fill="none" stroke="#3a4244" stroke-width="1.250" stroke-linejoin="round">
<defs><pattern id="hat" width="2.400" height="2.400" patternUnits="userSpaceOnUse" patternTransform="rotate(-45)"><rect width="2.400" height="1" fill="#3a4244" stroke="none"/></pattern><pattern id="hatf" width="3" height="3" patternUnits="userSpaceOnUse" patternTransform="rotate(-45)"><rect width="3" height="1" fill="#cfcfcf" stroke="none"/></pattern></defs>
<path d="M687.500 85.300H708.600V105.500H687.500ZM687.500 85.300L697.300 75.300H718.400L708.600 85.300M718.400 75.300V91M708.600 105.500L711.500 102.600"/><path d="M687.500 85.300H708.600L718.400 75.300" stroke-width="1.900"/>
<circle cx="718" cy="98.200" r="7" fill="rgba(245,245,245,.6)"/><path d="M718 93.700V102.700M713.500 98.200H722.500"/>
<path d="M733.4 76.400V104.600M733.400 76.4H762.500M739.2 76.400V104.600M733.400 82.0H762.500M745.0 76.400V104.600M733.400 87.7H762.500M750.9 76.400V104.600M733.400 93.3H762.500M756.7 76.400V104.600M733.400 99.0H762.500M762.5 76.400V104.600M733.400 104.6H762.500" stroke-width="1.300"/>
<circle cx="759.900" cy="100.300" r="7" fill="#e4e4e4"/><path d="M759.900 95.800V104.800M755.400 100.300H764.400"/>
<path d="M793.400 76.400L812.200 82L807 99.400L788.800 94.300Z"/><path d="M787.800 89.600L781.500 95.500M778.400 93.300L786.400 95.700L780.300 101.300Z"/><rect x="781.300" y="104.100" width="29.500" height="3.300" rx="1.650"/>
<text x="777.300" y="85.900" font-family="Liberation Sans" font-weight="700" font-size="5.400" fill="#3a4244" stroke="none" textLength="13" lengthAdjust="spacingAndGlyphs">AUTO</text>
<rect x="822.300" y="76.400" width="31.600" height="31"/><rect x="826.300" y="79.300" width="24.500" height="8.600"/><rect x="826.300" y="90.500" width="7.300" height="13.100"/><rect x="836.100" y="91" width="14.500" height="4.800"/><rect x="836.100" y="98.500" width="14.500" height="5.100"/>
<path d="M868.500 80.200H896.500" stroke-width="1.900"/><rect x="868.700" y="83.100" width="27.800" height="2.600" rx="1"/><rect x="868.700" y="87.800" width="27.800" height="3.600" rx="1.200" stroke="#5a6062"/><rect x="868.700" y="93.500" width="27.800" height="4.200" rx="1.400" stroke="#5a6062"/><rect x="868.700" y="100.300" width="27.800" height="4.700" rx="1.500" stroke="#5a6062"/>
<path d="M914.700 76.300V107.400" stroke="#8d9393" stroke-width="1.300"/>
<path d="M950.4 75.2L956.1 81.0L952.5 81.0L952.5 85.0L948.3 85.0L948.3 81.0L944.7 81.0ZM950.4 108.8L944.7 103.0L948.3 103.0L948.3 99.0L952.5 99.0L952.5 103.0L956.1 103.0ZM933.6 92.0L939.4 86.3L939.4 89.9L943.4 89.9L943.4 94.1L939.4 94.1L939.4 97.7ZM967.2 92.0L961.4 97.7L961.4 94.1L957.4 94.1L957.4 89.9L961.4 89.9L961.4 86.3Z"/><rect x="948.400" y="90" width="4" height="4"/>
<path d="M979.800 97A14 14 0 0 1 1003.800 82.500"/><path d="M1007.400 78.400L1010.500 88.300L1000.600 85.700Z"/><path d="M994.400 84.700L1006.400 96.100L994.400 108.100L982.400 96.100Z"/>
<rect x="1022.300" y="76.300" width="31.400" height="31.300" stroke-dasharray="2.200 1.800"/><rect x="1022.300" y="90.100" width="17.400" height="17.500"/><path d="M1041 87.500L1046.300 82.200L1044 80H1050.600V86.600L1048.400 84.400L1043.100 89.600Z" stroke-width="1.100"/>
<path d="M1081.400 76.500L1099.600 81L1095.400 99.250L1077.200 94.600Z"/><path d="M1075.600 89.300L1069.800 95M1066.250 93.500L1074.100 95.600L1068.300 101.300Z"/><rect x="1069.400" y="103.900" width="29.300" height="3.600" rx="1.800"/>
<rect x="1112.300" y="76.300" width="28.400" height="13.100"/><rect x="1112.300" y="93.500" width="28.400" height="13.900"/><path d="M1112.300 91.400H1140.700" stroke-dasharray="1.200 1"/>
<g stroke="#c9c9c9" stroke-width="1"><rect x="1164.200" y="76.300" width="23.400" height="23"/><rect x="1154.300" y="84.700" width="23.400" height="22.700"/><rect x="1164.200" y="84.700" width="13.500" height="14.600" fill="url(#hatf)"/></g>
<g stroke="#c9c9c9" stroke-width="1"><path d="M1213.100 77.400L1227.700 84.100L1225.600 88.300L1211 82.100Z"/><rect x="1202.500" y="97.500" width="29.200" height="8.800"/><rect x="1209.500" y="89.900" width="15.100" height="7.600" stroke-dasharray="1 1"/><path d="M1207.900 83.600L1202.700 89.900M1200.100 87.800L1207.400 89.900L1202.200 94.600Z"/></g>
<path d="M1257.400 76.900L1271.400 90.400L1255.800 107.100L1242 92.500ZM1243.800 90.400H1271.400"/><path d="M1245.900 75.800L1257.400 86.750" stroke-width="2.700" stroke="#262e30"/><path d="M1271.900 94.600C1269 100 1267.200 102.500 1267.200 104.700A4.700 4.700 0 0 0 1276.600 104.700C1276.600 102.500 1274.800 100 1271.900 94.600Z"/>
<path d="M1287.600 76.500H1311.800V81.500H1302.700V107.100H1296.200V81.500H1287.600Z"/>
<text transform="translate(1305.600 107.400) scale(.82 1)" font-family="Liberation Sans" font-weight="700" font-size="25.500" stroke-width="1" fill="#f2f2f2">a</text>
<path d="M1331.600 76.500H1362.600V107.400H1348.500V89.400H1331.600Z"/><rect x="1333.400" y="89.400" width="11.500" height="18" fill="url(#hat)"/>
<path d="M1375.600 86.750H1396.400V107.400H1375.600ZM1375.600 86.750L1386 76.500H1406.300L1396.400 86.750M1406.300 76.500V97.200L1396.400 107.400"/><path d="M1375.600 86.750H1396.400L1406.300 76.500" stroke-width="1.700"/><path d="M1380.300 87.800L1383.400 90L1388.100 105.500" stroke-dasharray="1 1.300" stroke-width="1"/>
<circle cx="1424.4" cy="81.8" r="4.800" fill="url(#hat)" stroke-width="1"/><circle cx="1444.7" cy="81.8" r="4.800" fill="url(#hat)" stroke-width="1"/><circle cx="1424.4" cy="102.0" r="4.800" fill="url(#hat)" stroke-width="1"/><circle cx="1444.7" cy="102.0" r="4.800" fill="url(#hat)" stroke-width="1"/><rect x="1424.400" y="82.400" width="20" height="19.200" fill="#ebebeb" stroke-width="1.500"/>
<path d="M1463.900 86.400H1485V107H1463.900ZM1463.900 86.400L1474.800 75.500H1495.200L1485 86.400M1495.200 75.500V96.100L1485 107" stroke-width="1.400"/><path d="M1464 89.8q1.750 -1.800 3.500 0t3.500 0t3.500 0t3.500 0t3.500 0t3.500 0M1485.500 90.3l2.400 -3.400l2.400 .6l2.400 -3.400l2.400 .6M1464 93.7q1.750 -1.800 3.500 0t3.500 0t3.500 0t3.500 0t3.500 0t3.500 0M1485.500 94.2l2.400 -3.400l2.400 .6l2.400 -3.400l2.400 .6M1464 97.6q1.750 -1.800 3.500 0t3.500 0t3.500 0t3.500 0t3.500 0t3.500 0M1485.500 98.1l2.400 -3.400l2.400 .6l2.400 -3.400l2.400 .6M1464 101.5q1.750 -1.800 3.500 0t3.500 0t3.500 0t3.500 0t3.500 0t3.500 0M1485.500 102.0l2.400 -3.400l2.400 .6l2.400 -3.400l2.400 .6M1464 105.4q1.750 -1.800 3.500 0t3.500 0t3.500 0t3.500 0t3.500 0t3.500 0M1485.500 105.9l2.400 -3.400l2.400 .6l2.400 -3.400l2.400 .6" stroke-width="1"/>
<g stroke="#d3d3d3" stroke-width="1"><path d="M1507.7 102.400V75.500H1525.2L1529.7 79.500"/><path d="M1513.2 82.100H1531.2L1536.3 87.500V107.800H1513.2Z" fill="rgba(250,250,250,.55)"/></g><text transform="translate(1518.7 103.200) scale(.85 1)" font-family="Liberation Sans" font-size="23" fill="none" stroke="#d4d4d4" stroke-width=".800">0</text>
<g stroke="#d3d3d3" stroke-width="1"><path d="M1551.9 102.400V75.500H1569.4L1573.9 79.500"/><path d="M1557.4 82.100H1575.4L1580.5 87.500V107.800H1557.4Z" fill="rgba(250,250,250,.55)"/></g><text transform="translate(1562.4 103.200) scale(.85 1)" font-family="Liberation Sans" font-size="21" fill="none" stroke="#d4d4d4" stroke-width=".800">P</text>
<path d="M1617 75.800L1626.900 85.500L1604.500 107.400L1594.800 97.700Z"/><path d="M1597.0 95.5l1.7 1.7M1599.2 93.3l2.5 2.5M1601.5 91.1l1.7 1.7M1603.7 88.9l2.5 2.5M1605.9 86.8l1.7 1.7M1608.1 84.6l2.5 2.5M1610.3 82.4l1.7 1.7M1612.6 80.2l2.5 2.5M1614.8 78.0l1.7 1.7" stroke-width="1"/>
<path d="M1642.800 76.600V107" stroke="#8d9393" stroke-width="1.300"/>
<path d="M1662.700 83.400Q1662.700 82.400 1663.700 82.400H1674.600Q1675.600 82.400 1675.500 83.600L1675.300 85.400C1673.600 85.600 1672.200 86.900 1672.300 88.500C1672.400 90 1673.800 91 1675.300 91.400V98.200C1677 98.600 1678.200 99.600 1678.200 101C1678.200 102.400 1677 103.400 1675.300 103.900V107.100" stroke-width="1.150"/><path d="M1662.700 83.400V106.100Q1662.700 107.100 1663.700 107.100H1686.600Q1687.600 107.100 1687.600 106.100V95.500Q1687.600 94.500 1686.600 94.500H1684.200C1683.800 92.900 1682.800 92.200 1681.500 92.200C1680.200 92.200 1679.200 92.900 1678.800 94.500H1671.600C1671.200 96.200 1670.200 97.200 1669 97.200C1667.800 97.200 1666.800 96.200 1666.200 94.500H1662.700" stroke-width="1.150"/><path d="M1677.100 83.300L1679.600 80.600C1678.400 79.200 1678.400 77.600 1679.600 76.600C1680.800 75.700 1682.400 76 1683.300 76.400L1685.500 74L1694.800 83.300L1685.500 92.200L1682.600 89.400C1683.800 88 1683.800 86.400 1682.800 85.600C1681.800 84.800 1680.400 85.200 1679.400 85.700Z" stroke-width="1.150"/>
</svg>
<div class="abs" style="left:426px;top:67px;width:20px;height:20px;background:#f4f4f4"></div>
<svg style="left:430px;top:72px" width="13" height="10" viewBox="0 0 13 10" fill="none" stroke="#4a5052"><path d="M3.800 1.500L1 5L3.800 8.500M9.200 1.500L12 5L9.200 8.500" stroke-width="1.100"/><path d="M6.500 0V10" stroke="#9aa0a0" stroke-width="1.600"/></svg>
<div id="left" class="abs" style="left:0;top:0;width:425px;height:1032px;background:none">
<div style="left:0;top:67px;width:421px;height:965px;background:#fff"></div>
<div style="left:0;top:67px;width:1px;height:965px;background:#a8a8a8"></div>
<div style="left:421px;top:67px;width:5px;height:965px;background:#cfcfcf;border-left:1px solid #ababab"></div>
<div style="left:1px;top:66.3px;width:420px;height:32.2px;background:linear-gradient(#f8f8f8,#f0f0f0);border-top:1px solid #d6d6d6;border-bottom:1px solid #cdcdcd"></div>
<svg style="left:11px;top:74px" width="19" height="17" viewBox="0 0 19 17"><path d="M1 4.500H13.500V15.800H1ZM1 4.500L5 1H17.500L13.500 4.500M17.500 1V12.500L13.500 15.800" fill="none" stroke="#5a6062" stroke-width="1.200" stroke-linejoin="round"/><path d="M3.500 13.500L7 11H11.500V13.500Z" fill="#00ae42"/><path d="M9.300 4.500V7" stroke="#5a6062" stroke-width="1"/></svg>
<div class="t" style="left:37.20px;top:74.06px;font-size:16px;letter-spacing:-0.355px;color:#262e30;">Профиль принтера</div>
<svg style="left:390.3px;top:74.3px" width="15" height="16" viewBox="0 0 15 16"><path d="M5.34 2.86L5.83 1.00L9.17 1.00L9.66 2.86L10.62 3.41L12.46 2.91L14.13 5.80L12.77 7.15L12.77 8.25L14.13 9.60L12.46 12.49L10.62 11.99L9.66 12.54L9.17 14.40L5.83 14.40L5.34 12.54L4.38 11.99L2.54 12.49L0.87 9.60L2.23 8.25L2.23 7.15L0.87 5.80L2.54 2.91L4.38 3.41Z" fill="none" stroke="#262e30" stroke-width="1.4" stroke-linejoin="round"/><circle cx="7.5" cy="7.7" r="2.3" fill="none" stroke="#262e30" stroke-width="1.4"/></svg>
<div style="left:5.200px;top:103px;width:211.800px;height:97.500px;border:1px solid #e3e3e3;border-radius:7px;background:#fff;overflow:hidden"><div style="position:absolute;right:-1px;top:-1px;width:0;height:0;border-top:18px solid #00ae42;border-left:18px solid transparent"></div></div>
<svg style="left:206px;top:105px" width="9" height="7" viewBox="0 0 9 7"><path d="M.800 3.800L3.200 6L8.200 .800" fill="none" stroke="#fff" stroke-width="1"/></svg>
<svg style="left:87px;top:115px" width="40" height="47" viewBox="0 0 40 47">
<path d="M19 11C19 3 22 1 27 1C32 1 35 5 35.500 11" fill="none" stroke="#9a9a9a" stroke-width=".7"/>
<path d="M36 20C37.500 30 37.500 40 35.500 45" fill="none" stroke="#8a8a8a" stroke-width=".7"/>
<rect x="7" y="11.500" width="28" height="4.500" fill="#b9bbbe"/>
<rect x="3" y="17" width="35.500" height="3.200" fill="#a9abae"/>
<rect x="3" y="17" width="4" height="5.500" fill="#8f9194"/>
<rect x="7.500" y="12" width="4.500" height="30" fill="#b4b6b9"/>
<rect x="30.500" y="12" width="5" height="32" fill="#9d9fa2"/>
<rect x="15.500" y="13" width="5.500" height="8.500" fill="#55585b"/>
<rect x="31.500" y="14" width="2.500" height="2.500" fill="#44474a"/>
<path d="M2 41.500L8 39.500H30L33 41.500V45.500H2Z" fill="#bfc1c4"/>
<path d="M6 40.800L9 39H29L27 40.800Z" fill="#4c4f52"/>
<rect x="23" y="40.500" width="7" height="3" fill="#3e4144"/>
<rect x="2" y="44.500" width="31" height="1.800" fill="#7d7f82"/>
<rect x="30" y="41.500" width="5.500" height="4.500" fill="#8b8d90"/>
</svg>
<svg style="left:54.5px;top:177.5px" width="10.5" height="6" viewBox="0 0 10.5 6"><path d="M.5 .5L5.25 5L10 .5" fill="none" stroke="#8a8a8a" stroke-width="1.1"/></svg>
<div class="t" style="left:71.50px;top:172.10px;font-size:15px;letter-spacing:0.033px;color:#262e30;">Bambu Lab A1</div>
<div style="left:221.500px;top:103px;width:95.500px;height:97.500px;border:1px solid #e3e3e3;border-radius:7px;background:#fff"></div>
<svg style="left:248px;top:118px" width="42" height="46" viewBox="0 0 42 46"><defs><linearGradient id="gold" x1="0" y1="0" x2="1" y2="1"><stop offset="0" stop-color="#c39b56"/><stop offset=".45" stop-color="#d2ab68"/><stop offset="1" stop-color="#bb9452"/></linearGradient></defs>
<path d="M0 1.200H16.500V.300H26V1.200H42V44.200H13V45.200H0Z" fill="url(#gold)"/><path d="M15.500 15H27V30H15.500ZM21.200 15V30" fill="none" stroke="#e2c48e" stroke-width=".5"/><rect x="13.500" y="43.200" width="20" height=".8" fill="#e6d0a6"/><rect x="36.500" y="42.800" width="4" height="1.200" fill="#f4ead6"/></svg>
<svg style="left:294.500px;top:116px" width="13" height="13" viewBox="0 0 13 13"><circle cx="6.500" cy="6.500" r="5.700" fill="#fff" stroke="#4a5052" stroke-width="1"/><path d="M6.600 5.600V9.600M5.300 9.600H7.900M5.500 5.600H6.600" stroke="#4a5052" stroke-width="1.100" fill="none"/><circle cx="6.500" cy="3.600" r=".8" fill="#4a5052"/></svg>
<svg style="left:230.5px;top:178px" width="10.5" height="6" viewBox="0 0 10.5 6"><path d="M.5 .5L5.25 5L10 .5" fill="none" stroke="#8a8a8a" stroke-width="1.1"/></svg>
<div class="t" style="left:247.20px;top:172.30px;font-size:15px;letter-spacing:-0.103px;color:#262e30;">Тексту...</div>
<div style="left:321px;top:103px;width:96px;height:97.500px;border:1px solid #c6c6c6;border-radius:8px;background:#f7f7f7"></div>
<svg style="left:353px;top:126px" width="32" height="27" viewBox="0 0 32 27"><path d="M5.500 15.500A10.500 10.500 0 0 1 25.300 8.600M26.500 11.500A10.500 10.500 0 0 1 6.700 18.400" fill="none" stroke="#262e30" stroke-width="1.700"/><path d="M21.500 10.800L29.800 7.500L27.600 15.200Z" fill="#262e30"/><path d="M10.500 16.200L2.200 19.500L4.400 11.800Z" fill="#262e30"/></svg>
<div class="t" style="left:337.00px;top:162.00px;font-size:15px;letter-spacing:0.145px;color:#1c2224;">Sync info</div>
<div style="left:5px;top:211.500px;width:412.500px;height:78.500px;border:1px solid #e4e4e4;background:#fff;overflow:hidden"><div style="position:absolute;right:-1px;top:-1px;width:0;height:0;border-top:19px solid #00ae42;border-left:19px solid transparent"></div></div>
<svg style="left:406px;top:214px" width="9" height="7" viewBox="0 0 9 7"><path d="M.800 3.800L3.200 6L8.200 .800" fill="none" stroke="#fff" stroke-width="1"/></svg>
<div class="t" style="left:12.00px;top:222.30px;font-size:13px;letter-spacing:-0.024px;color:#6b6b6b;">Сопло</div>
<div class="t" style="left:12.00px;top:253.86px;font-size:16px;letter-spacing:-0.095px;color:#262e30;">Диаметр</div>
<div style="left:78.300px;top:250.200px;width:132.500px;height:25.500px;border:1px solid #dbdbdb;background:#fff"></div>
<svg style="left:86px;top:260.5px" width="10" height="6" viewBox="0 0 10 6"><path d="M.5 .5L5 5L9.5 .5" fill="none" stroke="#8a8a8a" stroke-width="1.1"/></svg>
<div class="t" style="left:102.30px;top:254.48px;font-size:15.5px;letter-spacing:-0.615px;color:#262e30;">0.4</div>
<div class="t" style="left:219.30px;top:253.86px;font-size:16px;letter-spacing:0.082px;color:#262e30;">Поток</div>
<div style="left:265px;top:250.200px;width:136.700px;height:25.500px;border:1px solid #dbdbdb;background:#fff"></div>
<svg style="left:272.5px;top:260.5px" width="10" height="6" viewBox="0 0 10 6"><path d="M.5 .5L5 5L9.5 .5" fill="none" stroke="#8a8a8a" stroke-width="1.1"/></svg>
<div class="t" style="left:289.00px;top:254.48px;font-size:15.5px;letter-spacing:-0.063px;color:#262e30;">Стандартный</div>
<div style="left:1px;top:295px;width:420px;height:31.5px;background:linear-gradient(#f8f8f8,#f0f0f0);border-top:1px solid #d6d6d6;border-bottom:1px solid #cdcdcd"></div>
<svg style="left:12px;top:303px" width="16" height="15" viewBox="0 0 16 15"><path d="M2.200 .8C.300 4 .300 11 2.200 14.200M13.800 .8C15.700 4 15.700 11 13.800 14.200" fill="none" stroke="#5a6062" stroke-width="1"/><path d="M5 1C3.600 4 3.600 11 5 14M7.300 1C6 4 6 11 7.300 14M9.600 1C8.300 4 8.300 11 9.600 14M11.900 1C10.600 4 10.600 11 11.900 14" fill="none" stroke="#00ae42" stroke-width="1"/></svg>
<div class="t" style="left:37.20px;top:301.76px;font-size:16px;letter-spacing:-0.358px;color:#262e30;">Материалы проекта</div>
<svg style="left:305px;top:304.500px" width="12" height="12" viewBox="0 0 12 12"><path d="M6 0V12M0 6H12" stroke="#262e30" stroke-width="1.300"/></svg>
<svg style="left:333px;top:304.500px" width="12" height="12" viewBox="0 0 12 12"><path d="M0 6H12" stroke="#262e30" stroke-width="1.300"/></svg>
<svg style="left:359px;top:302.500px" width="18" height="16" viewBox="0 0 18 16"><path d="M1 5.500V2.500Q1 1 2.500 1H12.500Q14 1 14 2.500V5.500ZM1 5.500V13H8.500M14 5.500V7M3.500 1V3.500M6 1V3.500M8.500 1V3.500M11 1V3.500M1 9.500H5V13" fill="none" stroke="#262e30" stroke-width="1.100"/><circle cx="12.800" cy="11.200" r="4" fill="#f4f4f4" stroke="#262e30" stroke-width="1"/><path d="M10.800 10.300H14.600M14.800 12.200H11" stroke="#262e30" stroke-width=".9"/></svg>
<svg style="left:389.6px;top:302.2px" width="15" height="16" viewBox="0 0 15 16"><path d="M5.34 2.86L5.83 1.00L9.17 1.00L9.66 2.86L10.62 3.41L12.46 2.91L14.13 5.80L12.77 7.15L12.77 8.25L14.13 9.60L12.46 12.49L10.62 11.99L9.66 12.54L9.17 14.40L5.83 14.40L5.34 12.54L4.38 11.99L2.54 12.49L0.87 9.60L2.23 8.25L2.23 7.15L0.87 5.80L2.54 2.91L4.38 3.41Z" fill="none" stroke="#262e30" stroke-width="1.4" stroke-linejoin="round"/><circle cx="7.5" cy="7.7" r="2.3" fill="none" stroke="#262e30" stroke-width="1.4"/></svg>
<div style="left:11px;top:350px;width:20px;height:20px;border:1px solid #3c4446;background:#fff"></div>
<div class="t" style="left:17.00px;top:352.18px;font-size:15.5px;color:#262e30;">1</div>
<div style="left:37.200px;top:345.300px;width:345.500px;height:29.200px;border:1px solid #dbdbdb;background:#fff"></div>
<svg style="left:44.6px;top:357.5px" width="10" height="6" viewBox="0 0 10 6"><path d="M.5 .5L5 5L9.5 .5" fill="none" stroke="#8a8a8a" stroke-width="1.1"/></svg>
<div class="t" style="left:61.20px;top:353.07px;font-size:13.5px;letter-spacing:-0.341px;color:#262e30;">Eryone TPU 95 STANDART</div>
<svg style="left:389.500px;top:351.500px" width="15" height="15" viewBox="0 0 15 15"><circle cx="7.500" cy="7.500" r="6.700" fill="none" stroke="#262e30" stroke-width="1.100"/><circle cx="4.500" cy="7.500" r=".9" fill="#262e30"/><circle cx="7.500" cy="7.500" r=".9" fill="#262e30"/><circle cx="10.500" cy="7.500" r=".9" fill="#262e30"/></svg>
<div style="left:1px;top:393.5px;width:420px;height:31px;background:linear-gradient(#f8f8f8,#f0f0f0);border-top:1px solid #d6d6d6;border-bottom:1px solid #cdcdcd"></div>
<svg style="left:0;top:0" width="40" height="420" viewBox="0 0 40 420" fill="none" stroke-width="1.250" stroke-linejoin="round"><path d="M12.200 407.800L15.800 403.200H27L23.400 407.800Z" stroke="#5a6062"/><path d="M12.200 411.400H23.400L26.800 407.200" stroke="#00ae42"/><path d="M12.200 415.200H23.400L26.800 411" stroke="#5a6062"/></svg>
<div class="t" style="left:37.20px;top:399.96px;font-size:16px;letter-spacing:-0.454px;color:#262e30;">Процесс</div>
<div style="left:99.500px;top:398.500px;width:110px;height:20.500px;border-radius:10.250px;background:#d9d9d9"></div>
<div style="left:99.500px;top:398.500px;width:56px;height:20.500px;border-radius:10.250px;background:#00ae42"></div>
<div class="t" style="left:107.00px;top:402.20px;font-size:13px;letter-spacing:-0.649px;color:#fff;">Общие</div>
<div class="t" style="left:158.00px;top:402.20px;font-size:13px;letter-spacing:-0.391px;color:#8c8c8c;">Модели</div>
<div class="t" style="left:222.50px;top:399.96px;font-size:16px;letter-spacing:-0.520px;color:#262e30;">Расширенный</div>
<div style="left:324.400px;top:401.500px;width:26.200px;height:15px;border-radius:7.500px;background:#d9d9d9"></div>
<div style="left:325.600px;top:402.700px;width:12.600px;height:12.600px;border-radius:6.300px;background:#fff"></div>
<svg style="left:361.500px;top:403px" width="15" height="12" viewBox="0 0 15 12"><path d="M3.800 1.200H15M3.800 6H15M3.800 10.800H15" stroke="#262e30" stroke-width="1.300"/><circle cx="1" cy="1.200" r=".9" fill="#262e30"/><circle cx="1" cy="6" r=".9" fill="#262e30"/><circle cx="1" cy="10.800" r=".9" fill="#262e30"/></svg>
<svg style="left:390px;top:401.500px" width="15" height="15" viewBox="0 0 15 15"><path d="M1.500 14L13.500 1" stroke="#262e30" stroke-width="1.200"/><path d="M.500 3.200H6.500M4.300 .8L6.700 3.200L4.300 5.600M14.500 11.800H8.500M10.700 9.400L8.300 11.800L10.700 14.200" fill="none" stroke="#262e30" stroke-width="1.100"/></svg>
<svg style="left:0;top:0" width="260" height="600" viewBox="0 0 260 600" fill="none"><path d="M18.6 455.1A5.400 5.400 0 1 1 24.0 449.7" stroke="#f5704f" stroke-width="1.100"/><path d="M22.3 449.5H25.9L24.2 452.6Z" fill="#f5704f"/></svg>
<div style="left:37.200px;top:437.200px;width:284px;height:25.500px;border:1px solid #dbdbdb;background:#fff"></div>
<svg style="left:44.6px;top:447.5px" width="10" height="6" viewBox="0 0 10 6"><path d="M.5 .5L5 5L9.5 .5" fill="none" stroke="#8a8a8a" stroke-width="1.1"/></svg>
<div class="t" style="left:61.00px;top:441.76px;font-size:16px;letter-spacing:-0.363px;color:#262e30;">* 0.20mm Standard @TPU 95A</div>
<svg style="left:335px;top:444px" width="13" height="13" viewBox="0 0 13 13"><path d="M1.300 .700H8.500L12 4.200V11.300Q12 12.300 11 12.300H1.700Q.700 12.300 .700 11.300V1.300Q.700 .700 1.300 .700ZM3 .700V3.500H7.500V.700M2.600 12.300V8.300H10.200V12.300" fill="none" stroke="#262e30" stroke-width="1"/></svg>
<svg style="left:363.500px;top:444.800px" width="11" height="11" viewBox="0 0 11 11"><path d="M.700 .700L10.300 10.300M10.300 .700L.700 10.300" stroke="#262e30" stroke-width="1.200"/></svg>
<svg style="left:389.500px;top:443px" width="16" height="16" viewBox="0 0 16 16"><circle cx="6.200" cy="6.200" r="5.200" fill="none" stroke="#262e30" stroke-width="1.200"/><path d="M10 10L15 15" stroke="#262e30" stroke-width="1.300"/></svg>
<div class="t" style="left:15.60px;top:477.68px;font-size:15.5px;letter-spacing:0.184px;color:#f0694c;">Качество</div>
<div class="t" style="left:95.30px;top:477.68px;font-size:15.5px;letter-spacing:-0.024px;color:#8a8a8a;">Прочность</div>
<div class="t" style="left:184.40px;top:477.68px;font-size:15.5px;letter-spacing:-0.116px;color:#8a8a8a;">Скорость</div>
<div class="t" style="left:264.40px;top:477.68px;font-size:15.5px;letter-spacing:0.061px;color:#8a8a8a;">Поддержка</div>
<div class="t" style="left:359.30px;top:477.68px;font-size:15.5px;letter-spacing:-0.109px;color:#8a8a8a;">Прочее</div>
<div style="left:2px;top:500px;width:419px;height:1px;background:#d2d2d2"></div>
<div style="left:12px;top:497px;width:74px;height:3px;background:#00ae42;border-radius:1.500px"></div>
<div style="left:405px;top:507px;width:16px;height:525px;background:#f0f0f0"></div>
<div style="left:412px;top:524px;width:2.600px;height:122.500px;background:#6e6e6e"></div>
<svg style="left:11.500px;top:518.500px" width="16" height="15" viewBox="0 0 16 15"><path d="M3 .800H13L15.300 3.400H.700Z" fill="#3a4244"/><path d="M.700 5.300H15.300M.700 8H15.300M.700 10.700H15.300M.700 13.400H15.300" stroke="#3a4244" stroke-width="1.700"/></svg>
<div class="t" style="left:33.20px;top:518.30px;font-size:15px;letter-spacing:-0.365px;color:#1c2224;font-weight:700;">Высота слоя</div>
<div style="left:130px;top:526px;width:264px;height:1px;background:#e9e9e9"></div>
<div class="t" style="left:31.40px;top:549.58px;font-size:15.5px;letter-spacing:-0.410px;color:#262e30;">Высота слоя</div>
<div style="left:251px;top:545.2px;width:120px;height:25.5px;border:1px solid #dbdbdb;background:#fff"></div>
<div class="t" style="left:259.00px;top:549.68px;font-size:15.5px;color:#262e30;">0,2</div>
<div class="t" style="left:345.30px;top:552.34px;font-size:12px;letter-spacing:-0.150px;color:#6b6b6b;">мм</div>
<div class="t" style="left:31.40px;top:579.58px;font-size:15.5px;letter-spacing:-0.109px;color:#f0694c;">Высота первого слоя</div>
<div style="left:251px;top:575.2px;width:120px;height:25.5px;border:1px solid #dbdbdb;background:#fff"></div>
<div class="t" style="left:259.00px;top:579.68px;font-size:15.5px;color:#262e30;">0,12</div>
<div class="t" style="left:345.30px;top:582.34px;font-size:12px;letter-spacing:-0.150px;color:#6b6b6b;">мм</div>
<svg style="left:0;top:0" width="260" height="600" viewBox="0 0 260 600" fill="none"><path d="M240.3 593.7A5.400 5.400 0 1 1 245.7 588.3" stroke="#f5704f" stroke-width="1.100"/><path d="M244.0 588.1H247.6L245.9 591.2Z" fill="#f5704f"/></svg>
<svg style="left:11.500px;top:625.500px" width="16" height="14" viewBox="0 0 16 14"><rect x=".600" y=".800" width="14.800" height="3.300" fill="#6e7476" stroke="#3a4244" stroke-width="1"/><path d="M.600 7H15.400M1.500 7V13.500M14.500 7V13.500" stroke="#3a4244" stroke-width="1.300" fill="none"/></svg>
<div class="t" style="left:34.50px;top:624.80px;font-size:15px;letter-spacing:0.004px;color:#1c2224;font-weight:700;">Ширина экструзии</div>
<div style="left:178px;top:632px;width:216px;height:1px;background:#e9e9e9"></div>
<div class="t" style="left:31.40px;top:655.58px;font-size:15.5px;letter-spacing:-0.018px;color:#262e30;">По умолчанию</div>
<div style="left:251px;top:651.2px;width:120px;height:25.5px;border:1px solid #dbdbdb;background:#fff"></div>
<div class="t" style="left:259.00px;top:655.68px;font-size:15.5px;color:#262e30;">0,42</div>
<div class="t" style="left:345.30px;top:658.34px;font-size:12px;letter-spacing:-0.150px;color:#6b6b6b;">мм</div>
<div class="t" style="left:31.40px;top:685.58px;font-size:15.5px;letter-spacing:-0.269px;color:#262e30;">Первый слой</div>
<div style="left:251px;top:681.2px;width:120px;height:25.5px;border:1px solid #dbdbdb;background:#fff"></div>
<div class="t" style="left:259.00px;top:685.68px;font-size:15.5px;color:#262e30;">0,5</div>
<div class="t" style="left:345.30px;top:688.34px;font-size:12px;letter-spacing:-0.150px;color:#6b6b6b;">мм</div>
<div class="t" style="left:31.40px;top:715.58px;font-size:15.5px;letter-spacing:0.006px;color:#262e30;">Внешний периметр</div>
<div style="left:251px;top:711.2px;width:120px;height:25.5px;border:1px solid #dbdbdb;background:#fff"></div>
<div class="t" style="left:259.00px;top:715.68px;font-size:15.5px;color:#262e30;">0,42</div>
<div class="t" style="left:345.30px;top:718.34px;font-size:12px;letter-spacing:-0.150px;color:#6b6b6b;">мм</div>
<div class="t" style="left:31.40px;top:745.58px;font-size:15.5px;letter-spacing:0.020px;color:#262e30;">Внутренние периметры</div>
<div style="left:251px;top:741.2px;width:120px;height:25.5px;border:1px solid #dbdbdb;background:#fff"></div>
<div class="t" style="left:259.00px;top:745.68px;font-size:15.5px;color:#262e30;">0,45</div>
<div class="t" style="left:345.30px;top:748.34px;font-size:12px;letter-spacing:-0.150px;color:#6b6b6b;">мм</div>
<div class="t" style="left:31.40px;top:775.58px;font-size:15.5px;letter-spacing:-0.147px;color:#262e30;">Верхняя поверхность</div>
<div style="left:251px;top:771.2px;width:120px;height:25.5px;border:1px solid #dbdbdb;background:#fff"></div>
<div class="t" style="left:259.00px;top:775.68px;font-size:15.5px;color:#262e30;">0,42</div>
<div class="t" style="left:345.30px;top:778.34px;font-size:12px;letter-spacing:-0.150px;color:#6b6b6b;">мм</div>
<div class="t" style="left:31.40px;top:805.58px;font-size:15.5px;letter-spacing:-0.131px;color:#262e30;">Заполнение</div>
<div style="left:251px;top:801.2px;width:120px;height:25.5px;border:1px solid #dbdbdb;background:#fff"></div>
<div class="t" style="left:259.00px;top:805.68px;font-size:15.5px;color:#262e30;">0,45</div>
<div class="t" style="left:345.30px;top:808.34px;font-size:12px;letter-spacing:-0.150px;color:#6b6b6b;">мм</div>
<div class="t" style="left:31.40px;top:835.58px;font-size:15.5px;letter-spacing:-0.148px;color:#262e30;">Сплошное заполнение</div>
<div style="left:251px;top:831.2px;width:120px;height:25.5px;border:1px solid #dbdbdb;background:#fff"></div>
<div class="t" style="left:259.00px;top:835.68px;font-size:15.5px;color:#262e30;">0,42</div>
<div class="t" style="left:345.30px;top:838.34px;font-size:12px;letter-spacing:-0.150px;color:#6b6b6b;">мм</div>
<div class="t" style="left:31.40px;top:865.58px;font-size:15.5px;letter-spacing:0.038px;color:#262e30;">Поддержка</div>
<div style="left:251px;top:861.2px;width:120px;height:25.5px;border:1px solid #dbdbdb;background:#fff"></div>
<div class="t" style="left:259.00px;top:865.68px;font-size:15.5px;color:#262e30;">0,42</div>
<div class="t" style="left:345.30px;top:868.34px;font-size:12px;letter-spacing:-0.150px;color:#6b6b6b;">мм</div>
<svg style="left:11.500px;top:910.500px" width="16" height="15" viewBox="0 0 16 15"><rect x=".600" y=".600" width="14.600" height="13.800" rx="1" fill="#d9d9d9" stroke="#3a4244" stroke-width="1.100"/><path d="M3.500 11.500V7.500Q3.500 5.500 5.500 5.500H9.500Q11.500 5.500 11.500 3.500" fill="none" stroke="#3a4244" stroke-width=".9" stroke-dasharray="1.200 1"/></svg>
<div class="t" style="left:33.50px;top:910.60px;font-size:15px;letter-spacing:-0.318px;color:#1c2224;font-weight:700;">Шов</div>
<div style="left:71px;top:918px;width:323px;height:1px;background:#e9e9e9"></div>
<div class="t" style="left:31.40px;top:941.68px;font-size:15.5px;letter-spacing:-0.155px;color:#262e30;">Позиция шва</div>
<div style="left:251px;top:937.200px;width:120px;height:25.500px;border:1px solid #dbdbdb;background:#fff"></div>
<svg style="left:258.4px;top:947.5px" width="10" height="6" viewBox="0 0 10 6"><path d="M.5 .5L5 5L9.5 .5" fill="none" stroke="#8a8a8a" stroke-width="1.1"/></svg>
<div class="t" style="left:275.50px;top:941.68px;font-size:15.5px;letter-spacing:-0.264px;color:#262e30;">Выровненн...</div>
<div class="t" style="left:31.00px;top:972.28px;font-size:15.5px;letter-spacing:-0.066px;color:#262e30;">Seam placement away from</div>
<div class="t" style="left:31.00px;top:989.68px;font-size:15.5px;letter-spacing:0.046px;color:#262e30;">overhangs(experimental)</div>
<div style="left:252.300px;top:981.500px;width:15.700px;height:15.500px;border:1px solid #c4c4c4;background:#fff;border-radius:1px"></div>
<div class="t" style="left:31.40px;top:1019.58px;font-size:15.5px;letter-spacing:-0.378px;color:#262e30;">Зазор шва</div>
<div style="left:251px;top:1015.2px;width:120px;height:25.5px;border:1px solid #dbdbdb;background:#fff"></div>
<div class="t" style="left:259.00px;top:1019.68px;font-size:15.5px;color:#262e30;">15</div>
<div class="t" style="left:352.50px;top:1022.34px;font-size:12px;letter-spacing:-1.671px;color:#6b6b6b;">%</div>
<div style="left:0;top:1031px;width:422px;height:1px;background:#a6a6a6"></div>
</div>
<div id="title" class="abs">

<svg style="left:14px;top:8px" width="16" height="14" viewBox="0 0 16 14"><path d="M0 1.2H16M0 7H16M0 12.8H16" stroke="#fff" stroke-width="1.5" fill="none"/></svg>
<div class="t" style="left:34px;top:9px">Файл</div>
<svg style="left:84px;top:11px" width="14" height="8" viewBox="0 0 14 8"><path d="M1 1L7 6.5L13 1" stroke="#fff" stroke-width="1.4" fill="none"/></svg>
<div style="left:116px;top:3px;width:1px;height:23px;background:#5a6062"></div>
<svg style="left:140px;top:6px" width="17" height="17" viewBox="0 0 17 17"><path d="M2.2 1H11L15.6 5.6V14.2Q15.6 15.8 14 15.8H2.4Q.8 15.8 .8 14.2V2.4Q.8 1 2.2 1Z" fill="none" stroke="#d8dadb" stroke-width="1.3"/><rect x="3.6" y="1.2" width="5.6" height="3.6" fill="#d8dadb"/><rect x="3.2" y="10.6" width="10" height="3.6" fill="#e8e9ea"/></svg>
<svg style="left:178px;top:8px" width="18" height="13" viewBox="0 0 18 13"><path d="M7.2 0L0 5.6L7.2 11.2V7.6C12 7.4 15 9 17 12.6C16.6 7.4 13 3.8 7.2 3.6Z" fill="#fff"/></svg>
<svg style="left:217px;top:8px" width="18" height="13" viewBox="0 0 18 13"><path d="M10.8 0L18 5.6L10.8 11.2V7.6C6 7.4 3 9 1 12.6C1.4 7.4 5 3.8 10.8 3.6Z" fill="#fff"/></svg>
<svg style="left:256px;top:5px" width="18" height="18" viewBox="0 0 18 18"><rect x="3.2" y="3.6" width="11" height="10.6" rx="1" fill="#4a4f52" stroke="#d8dadb" stroke-width="1.3"/><path d="M8.7 0V18M0 8.9H18" stroke="#e8e9ea" stroke-width="1.2"/></svg>
<div class="t" style="left:276px;top:9px">Калибровка</div>
<div class="t" style="left:1031px;top:9px">T-shirt_Print(2)</div>
<svg style="left:1829px;top:13.500px" width="12" height="2"><rect width="11" height="1.2" fill="#fff"/></svg>
<svg style="left:1860px;top:7px" width="16" height="14" viewBox="0 0 16 14"><rect x=".7" y=".7" width="10" height="8.6" rx="1.6" fill="none" stroke="#fff" stroke-width="1.2"/><rect x="4.6" y="4.2" width="10" height="8.6" rx="1.6" fill="#262d30" stroke="#fff" stroke-width="1.2"/></svg>
<svg style="left:1895px;top:9.500px" width="11" height="11" viewBox="0 0 11 11"><path d="M1 1L10 10M10 1L1 10" stroke="#fff" stroke-width="1.2"/></svg>
</div>
<div id="tabs" class="abs">

<div style="left:0;top:0;width:41px;height:36px;background:#363e40"></div>
<svg style="left:11px;top:8px" width="20" height="20" viewBox="0 0 20 20"><path d="M10 .6L.4 9.8H3V19H8V12.6H12V19H17V9.8H19.6Z" fill="#fff"/></svg>
<div style="left:41px;top:0;width:136px;height:36px;background:#00ae42"></div>
<svg style="left:54px;top:9px" width="17" height="18" viewBox="0 0 17 18"><path d="M8.5 1L16 5V13L8.5 17L1 13V5ZM1 5L8.5 9L16 5M8.5 9" fill="none" stroke="#fff" stroke-width="1.4" stroke-linejoin="round"/></svg>
<div class="t" style="left:81px;top:10px">Подготовка</div>
<svg style="left:189px;top:9px" width="17" height="18" viewBox="0 0 17 18"><path d="M8.5 1L16 4.8L8.5 8.6L1 4.8ZM1 8.8L8.5 12.6L16 8.8M1 12.6L8.5 16.4L16 12.6" fill="none" stroke="#fff" stroke-width="1.3" stroke-linejoin="round"/></svg>
<div class="t" style="left:216px;top:10px;letter-spacing:-.12px">Предпросмотр нарезки</div>
<svg style="left:418px;top:10px" width="18" height="17" viewBox="0 0 18 17"><path d="M1 1H8V5H1ZM4.5 5V7.5M2 7.5H7M13 1H17V4M1 12V16H5M10.5 9.5H17V16H10.5ZM12.6 9.5V12.4H15V9.5" fill="none" stroke="#fff" stroke-width="1.3"/></svg>
<div class="t" style="left:446px;top:10px;letter-spacing:-.2px">Принтер</div>
<svg style="left:560px;top:10px" width="18" height="17" viewBox="0 0 18 17"><rect x=".7" y=".7" width="16.2" height="15" rx="2" fill="none" stroke="#fff" stroke-width="1.3"/><path d="M4 4.7H5.6M7.6 4.7H13.6M4 8.2H5.6M7.6 8.2H13.6M4 11.7H5.6M7.6 11.7H13.6" stroke="#fff" stroke-width="1.3"/></svg>
<div class="t" style="left:587px;top:10px">Проект</div>
<svg style="left:680px;top:12px" width="14" height="14" viewBox="0 0 14 14"><path d="M7 .8L9 2.2L11.4 2.2L11.9 4.6L13.3 6.6L12.2 8.8L12 11.2L9.7 11.8L7.6 13.2L5.6 12.1L3.2 12L2.6 9.6L1 7.7L2 5.5L2.1 3.1L4.5 2.6Z" fill="none" stroke="#fff" stroke-width="1.3" stroke-linejoin="round"/><path d="M7 9.6V5.2M5 7L7 5L9 7" fill="none" stroke="#fff" stroke-width="1.3"/></svg>
<div class="t" style="left:706px;top:10px;letter-spacing:-.2px">Калибровка</div>
<svg style="left:1463px;top:10px" width="16" height="16" viewBox="0 0 16 16"><rect x=".6" y=".6" width="14.6" height="14.6" rx="1.5" fill="#fff"/><rect x="1.8" y="1.8" width="5.2" height="12.2" fill="#00ae42"/><rect x="8.6" y="1.4" width="6" height="5.4" fill="#b57bee"/><rect x="8.6" y="8.6" width="5.4" height="5.4" fill="#00ae42"/></svg>
<div style="left:1500px;top:7px;width:1px;height:22px;background:#596063"></div>
<div style="left:1512px;top:6px;width:24px;height:24px;background:#00ae42;border-radius:12px 0 0 12px"></div>
<div style="left:1538px;top:6px;width:139px;height:24px;background:#00ae42;border-radius:0 12px 12px 0"></div>
<svg style="left:1520px;top:15px" width="11" height="7" viewBox="0 0 11 7"><path d="M1 1.2L5.5 5.4L10 1.2" fill="none" stroke="#fff" stroke-width="1.3"/></svg>
<div class="t" style="left:1553px;top:10px;font-size:15px;letter-spacing:.04px">Нарезать стол</div>
<div style="left:1692px;top:6px;width:24px;height:24px;background:#00ae42;border-radius:12px 0 0 12px"></div>
<div style="left:1718px;top:6px;width:160px;height:24px;background:#6b6b6b;border-radius:0 12px 12px 0"></div>
<svg style="left:1700px;top:15px" width="11" height="7" viewBox="0 0 11 7"><path d="M1 1.2L5.5 5.4L10 1.2" fill="none" stroke="#fff" stroke-width="1.3"/></svg>
<div class="t" style="left:1733px;top:10px;font-size:15px;color:#939393">Распечатать стол</div>
</div>
<div class="menu abs" style="left:1266.5px;top:374.5px;width:367.5px;height:656px">
</div>
<div class="abs" id="menuitems" style="left:0;top:0;width:1920px;height:1032px">
<div style="left:1272px;top:605.8px;width:356px;height:22.2px;background:#efefef;border-radius:4px"></div>
<div class="t" style="left:1304.00px;top:382.34px;font-size:12px;letter-spacing:0.005px;color:#1b1b1b;">Заполнить весь стол копиями</div>
<div class="t" style="left:1304.00px;top:404.34px;font-size:12px;letter-spacing:-0.061px;color:#1b1b1b;">Сделать копию</div>
<div class="t" style="left:1575.20px;top:404.34px;font-size:12px;letter-spacing:0.021px;color:#1b1b1b;">Ctrl+K</div>
<div class="t" style="left:1304.00px;top:426.34px;font-size:12px;letter-spacing:0.074px;color:#1b1b1b;">Починить модель</div>
<div class="t" style="left:1304.00px;top:448.04px;font-size:12px;letter-spacing:0.101px;color:#1b1b1b;">Упростить полигональную сетку</div>
<div class="t" style="left:1304.00px;top:470.04px;font-size:12px;letter-spacing:-0.052px;color:#1b1b1b;">Subdivision mesh(Lost color)</div>
<div class="t" style="left:1304.00px;top:501.24px;font-size:12px;letter-spacing:-0.082px;color:#a3a3a3;">Булевы операции</div>
<div class="t" style="left:1304.00px;top:523.24px;font-size:12px;letter-spacing:0.002px;color:#1b1b1b;">Scale to print volume</div>
<div class="t" style="left:1304.00px;top:545.04px;font-size:12px;letter-spacing:0.044px;color:#a3a3a3;">По центру</div>
<div class="t" style="left:1304.00px;top:566.94px;font-size:12px;letter-spacing:0.219px;color:#1b1b1b;">Align/Distribute</div>
<svg style="left:1613.5px;top:567.8px" width="6" height="10" viewBox="0 0 6 10"><path d="M.8 .8L5 5L.8 9.2" fill="none" stroke="#3a3a3a" stroke-width="1.1"/></svg>
<div class="t" style="left:1304.00px;top:588.94px;font-size:12px;letter-spacing:-0.346px;color:#a3a3a3;">Разделить</div>
<svg style="left:1613.5px;top:589.8px" width="6" height="10" viewBox="0 0 6 10"><path d="M.8 .8L5 5L.8 9.2" fill="none" stroke="#a3a3a3" stroke-width="1.1"/></svg>
<div class="t" style="left:1304.00px;top:610.94px;font-size:12px;letter-spacing:-0.274px;color:#1b1b1b;">Отразить</div>
<svg style="left:1613.5px;top:611.8px" width="6" height="10" viewBox="0 0 6 10"><path d="M.8 .8L5 5L.8 9.2" fill="none" stroke="#3a3a3a" stroke-width="1.1"/></svg>
<div class="t" style="left:1304.00px;top:632.94px;font-size:12px;letter-spacing:-0.259px;color:#1b1b1b;">Удалить</div>
<div class="t" style="left:1576.30px;top:632.94px;font-size:12px;letter-spacing:-0.331px;color:#1b1b1b;">Delete</div>
<div class="t" style="left:1304.00px;top:664.14px;font-size:12px;letter-spacing:-0.121px;color:#1b1b1b;">Добавить элемент</div>
<svg style="left:1613.5px;top:665px" width="6" height="10" viewBox="0 0 6 10"><path d="M.8 .8L5 5L.8 9.2" fill="none" stroke="#3a3a3a" stroke-width="1.1"/></svg>
<div class="t" style="left:1304.00px;top:686.34px;font-size:12px;letter-spacing:-0.111px;color:#1b1b1b;">Добавить объём для вычитания</div>
<svg style="left:1613.5px;top:687.2px" width="6" height="10" viewBox="0 0 6 10"><path d="M.8 .8L5 5L.8 9.2" fill="none" stroke="#3a3a3a" stroke-width="1.1"/></svg>
<div class="t" style="left:1304.00px;top:708.44px;font-size:12px;letter-spacing:-0.067px;color:#1b1b1b;">Добавить модификатор</div>
<svg style="left:1613.5px;top:709.3px" width="6" height="10" viewBox="0 0 6 10"><path d="M.8 .8L5 5L.8 9.2" fill="none" stroke="#3a3a3a" stroke-width="1.1"/></svg>
<div class="t" style="left:1304.00px;top:730.34px;font-size:12px;letter-spacing:0.111px;color:#1b1b1b;">Добавить блокировщик поддержки</div>
<svg style="left:1613.5px;top:731.2px" width="6" height="10" viewBox="0 0 6 10"><path d="M.8 .8L5 5L.8 9.2" fill="none" stroke="#3a3a3a" stroke-width="1.1"/></svg>
<div class="t" style="left:1304.00px;top:752.24px;font-size:12px;letter-spacing:0.012px;color:#1b1b1b;">Добавить принудительную поддержку</div>
<svg style="left:1613.5px;top:753.1px" width="6" height="10" viewBox="0 0 6 10"><path d="M.8 .8L5 5L.8 9.2" fill="none" stroke="#3a3a3a" stroke-width="1.1"/></svg>
<div class="t" style="left:1304.00px;top:774.34px;font-size:12px;letter-spacing:-0.080px;color:#1b1b1b;">Модификатор диапазона высоты слоёв</div>
<div class="t" style="left:1304.00px;top:805.14px;font-size:12px;letter-spacing:-0.079px;color:#1b1b1b;">Для печати</div>
<div class="t" style="left:1304.00px;top:826.94px;font-size:12px;letter-spacing:-0.060px;color:#1b1b1b;">Редактировать настройки процесса печати</div>
<div class="t" style="left:1304.00px;top:848.84px;font-size:12px;letter-spacing:-0.266px;color:#1b1b1b;">Copy Process Settings</div>
<div class="t" style="left:1304.00px;top:870.64px;font-size:12px;letter-spacing:-0.375px;color:#a3a3a3;">Paste Process Settings</div>
<div class="t" style="left:1304.00px;top:892.74px;font-size:12px;letter-spacing:-0.097px;color:#1b1b1b;">Редактирование таблицы параметров</div>
<div class="t" style="left:1304.00px;top:923.94px;font-size:12px;letter-spacing:-0.147px;color:#1b1b1b;">Перезагрузить с диска</div>
<div class="t" style="left:1304.00px;top:946.04px;font-size:12px;letter-spacing:-0.061px;color:#1b1b1b;">Заменить на другую модель</div>
<div class="t" style="left:1304.00px;top:967.94px;font-size:12px;letter-spacing:-0.245px;color:#1b1b1b;">Экспорт в один STL</div>
<div class="t" style="left:1304.00px;top:989.84px;font-size:12px;letter-spacing:0.022px;color:#1b1b1b;">Преобразовать дюймы в миллиметры</div>
<div class="t" style="left:1304.00px;top:1011.94px;font-size:12px;letter-spacing:0.022px;color:#1b1b1b;">Преобразовать миллиметры в дюймы</div>
<div class="sep" style="left:1274.8px;top:490.5px;width:350.6px;background:#d6d6d6"></div>
<div class="sep" style="left:1274.8px;top:653.8px;width:350.6px;background:#d6d6d6"></div>
<div class="sep" style="left:1274.8px;top:794.9px;width:350.6px;background:#d6d6d6"></div>
<div class="sep" style="left:1274.8px;top:913.7px;width:350.6px;background:#d6d6d6"></div>
<svg style="left:1274.5px;top:661.5px" width="17" height="17" viewBox="0 0 17 17"><path d="M7 3.500H2.500Q1 3.500 1 5V13.500Q1 15 2.500 15H10.500Q12 15 12 13.500V9.500" fill="none" stroke="#5a6062" stroke-width="1.1"/><path d="M12 .8V7.200M8.800 4H15.200" stroke="#00ae42" stroke-width="1.2"/></svg>
<svg style="left:1274.5px;top:683.5px" width="17" height="17" viewBox="0 0 17 17"><path d="M7 3.500H2.500Q1 3.500 1 5V13.500Q1 15 2.500 15H10.500Q12 15 12 13.500V9.500" fill="none" stroke="#5a6062" stroke-width="1.1"/><path d="M8.800 3.500H15.200" stroke="#00ae42" stroke-width="1.2"/></svg>
<svg style="left:1274.5px;top:705.5px" width="17" height="17" viewBox="0 0 17 17"><path d="M7 3.500H2.500Q1 3.500 1 5V13.500Q1 15 2.500 15H10.500Q12 15 12 13.500V9.500" fill="none" stroke="#5a6062" stroke-width="1.1"/><circle cx="12.200" cy="4.500" r="3.500" fill="#00ae42"/></svg>
<svg style="left:1274.200px;top:728.600px" width="15" height="15" viewBox="0 0 16 16"><path d="M1.500 2L8 7.500L14.500 2" fill="none" stroke="#5a6062" stroke-width="1"/><path d="M1.500 6.500L4.500 9L8 6.500L11.500 9L14.500 6.500V14.500H1.500Z" fill="none" stroke="#00ae42" stroke-width="1.1" stroke-dasharray="1.6 1"/></svg>
<svg style="left:1274.200px;top:750.600px" width="15" height="15" viewBox="0 0 16 16"><path d="M1.500 2L8 7.500L14.500 2" fill="none" stroke="#5a6062" stroke-width="1"/><path d="M1.500 6.500L4.500 9L8 6.500L11.500 9L14.500 6.500V14.500H1.500Z" fill="none" stroke="#00ae42" stroke-width="1.300"/></svg>
<svg style="left:1278px;top:807px" width="10" height="8" viewBox="0 0 10 8"><path d="M.8 4.200L3.500 7L9.200 .8" fill="none" stroke="#1b1b1b" stroke-width="1.1"/></svg>
</div>
<div class="menu abs" style="left:1630.200px;top:604px;width:161.600px;height:70px">
</div>
<div class="abs" style="left:0;top:0;width:1920px;height:1032px">
<div style="left:1635.400px;top:628px;width:151.200px;height:21.800px;background:#efefef;border-radius:4px"></div>
<div class="t" style="left:1667.40px;top:610.94px;font-size:12px;letter-spacing:-0.235px;color:#1b1b1b;">Вдоль оси X</div>
<div class="t" style="left:1667.40px;top:632.94px;font-size:12px;letter-spacing:-0.235px;color:#1b1b1b;">Вдоль оси Y</div>
<div class="t" style="left:1667.40px;top:654.94px;font-size:12px;letter-spacing:-0.173px;color:#1b1b1b;">Вдоль оси Z</div>
</div>
</div>
</body>
</html>
